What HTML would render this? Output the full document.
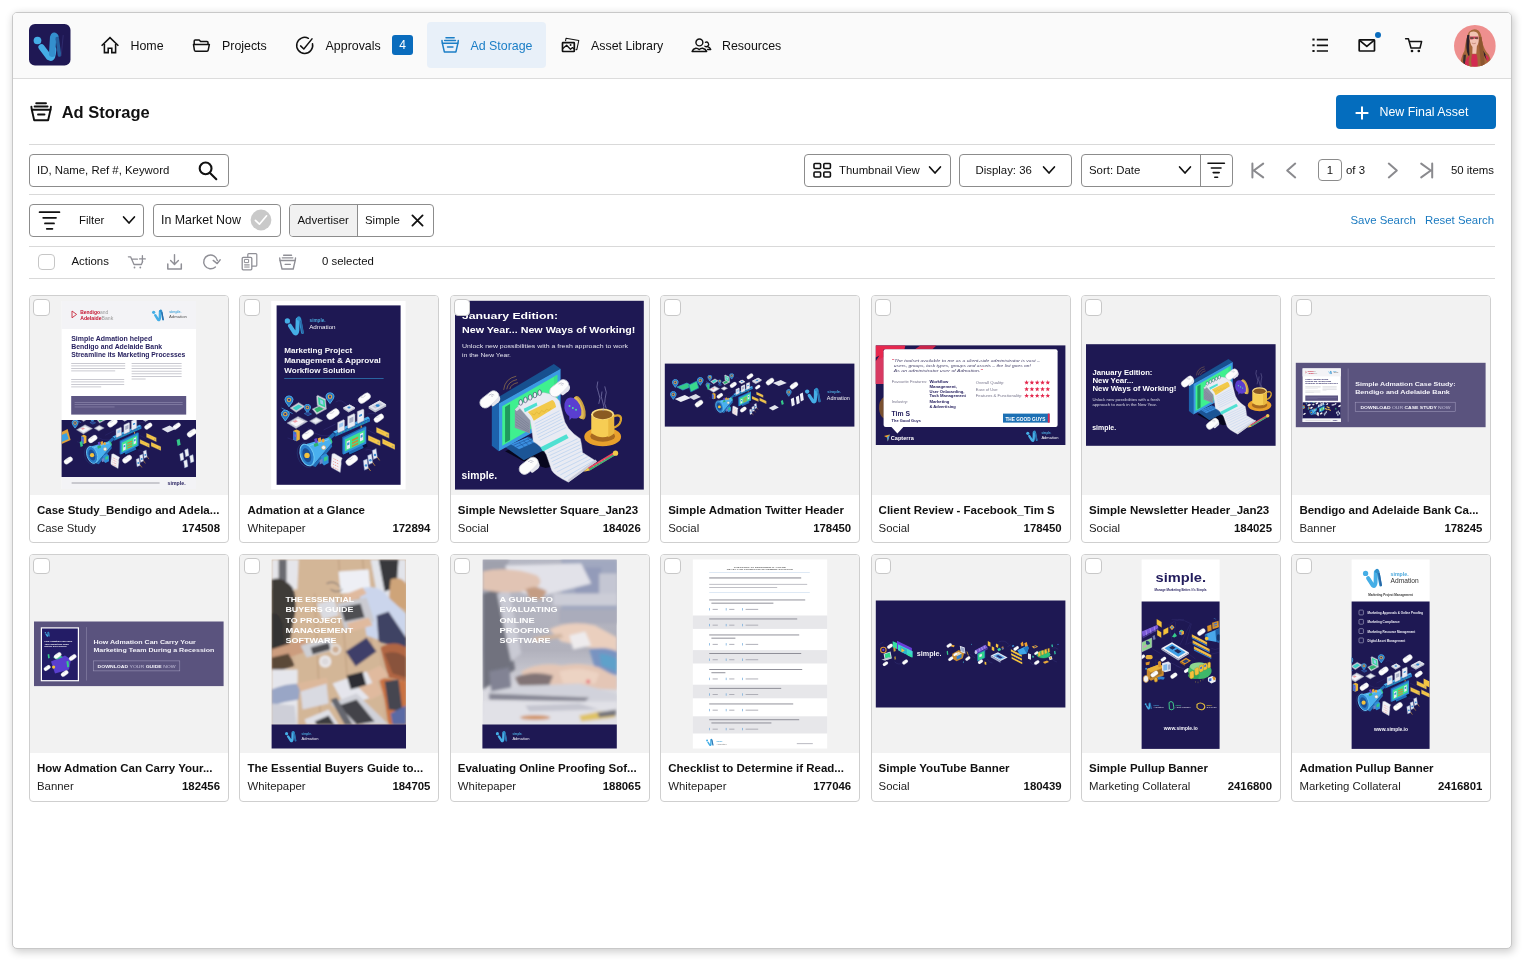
<!DOCTYPE html>
<html lang="en">
<head>
<meta charset="utf-8">
<title>Ad Storage</title>
<style>
*{box-sizing:border-box;margin:0;padding:0}
html,body{width:1530px;height:968px;overflow:hidden;background:#fff}
body{font-family:"Liberation Sans",Arial,Helvetica,sans-serif;color:#111;position:relative;font-size:12px}
.abs{position:absolute}
#frame{position:absolute;left:12px;top:12px;width:1500px;height:937px;border:1px solid #c8c8c8;border-radius:5px;background:#fff;box-shadow:1.5px 2.5px 8px .5px rgba(0,0,0,.2)}
#nav{position:absolute;left:13px;top:13px;width:1498px;height:66px;background:#fafafa;border-bottom:1px solid #dcdcdc;border-radius:4px 4px 0 0}
.nt{position:absolute;top:38.6px;font-size:12.4px;line-height:15px;white-space:nowrap;color:#111}
.hr{position:absolute;left:29px;width:1466px;height:1px;background:#d9d9d9}
.box{position:absolute;border:1px solid #8c8c8c;border-radius:4px;background:#fff;height:33px}
.t12{position:absolute;font-size:12px;line-height:14px;white-space:nowrap;color:#111}
.card{position:absolute;width:200px;height:248px;border:1px solid #cfcfcf;border-radius:4px;background:#fff;overflow:hidden}
.card .img{position:absolute;left:0;top:0;width:198px;height:199px;background:#f2f2f2;overflow:hidden}
.card .cb{position:absolute;left:3.3px;top:3.4px;width:16.4px;height:16.2px;border:1px solid #c8c8c8;border-radius:4px;background:#fff}
.card .ti{position:absolute;left:7px;top:207px;font-size:11.5px;line-height:14px;font-weight:bold;white-space:nowrap;color:#111}
.card .ty{position:absolute;left:7px;top:225px;font-size:11.4px;line-height:14px;white-space:nowrap;color:#222}
.card .id{position:absolute;right:8px;top:225px;font-size:11.4px;line-height:14px;font-weight:bold;white-space:nowrap;color:#111}
.r2 .ti{top:206.2px}.r2 .ty,.r2 .id{top:224.2px}.r2 .img{height:198.6px}
svg{display:block;overflow:visible}
svg svg{overflow:hidden}
</style>
</head>
<body>
<div id="frame"></div>
<div id="wrap" style="position:absolute;left:0;top:0;width:1530px;height:968px;will-change:transform">
<div id="nav"></div>
<!--NAV-->
<!-- logo -->
<svg class="abs" style="left:29px;top:24.3px" width="41.5" height="41.7" viewBox="0 0 42 42">
  <rect width="42" height="42" rx="6" fill="#1f1854"/>
  <circle cx="8.6" cy="16.6" r="3.9" fill="#45aee6"/>
  <path d="M12.6 23.4 L20.4 33.6 Q23.4 35.6 24 30.4 L24.6 26" fill="none" stroke="#45aee6" stroke-width="6.2" stroke-linecap="round" stroke-linejoin="round"/>
  <path d="M23.4 30 L24.4 13.4 Q25.2 10.6 26.6 12.4" fill="none" stroke="#348fcd" stroke-width="6.4" stroke-linecap="round" stroke-linejoin="round"/>
  <path d="M28.6 14.6 L30.8 31.2" fill="none" stroke="#25609f" stroke-width="3.6" stroke-linecap="round"/>
  <path d="M34.6 11.5 L32.6 32" fill="none" stroke="#2f2b6e" stroke-width="1" stroke-linecap="round"/>
</svg>
<!-- home -->
<svg class="abs" style="left:100px;top:36px" width="20" height="18" viewBox="0 0 20 18" fill="none" stroke="#111" stroke-width="1.55" stroke-linejoin="miter">
  <path d="M1.6 9.7 L10 1.6 L18.4 9.7"/>
  <path d="M4.4 8 V16.6 H8.2 V12.2 H11.8 V16.6 H15.6 V8"/>
</svg>
<div class="nt" style="left:130.5px">Home</div>
<!-- projects -->
<svg class="abs" style="left:192px;top:38px" width="20" height="15" viewBox="0 0 20 15" fill="none" stroke="#111" stroke-width="1.5" stroke-linejoin="round">
  <path d="M2.2 6.2 V3 Q2.2 2 3.2 2 H7.2 L8.6 3.6 H15 Q16 3.6 16 4.6 V6.2"/>
  <path d="M1.5 6.4 H17.4 L16.2 12.2 Q16 13.2 15 13.2 H3.6 Q2.6 13.2 2.4 12.2 Z"/>
</svg>
<div class="nt" style="left:222px">Projects</div>
<!-- approvals -->
<svg class="abs" style="left:295px;top:36px" width="20" height="19" viewBox="0 0 20 19" fill="none" stroke="#111" stroke-width="1.5" stroke-linecap="round" stroke-linejoin="round">
  <path d="M17.5 7.7 A8 8 0 1 1 13.4 2.3"/>
  <path d="M5.6 9.9 L8.8 13 L17 2.9"/>
</svg>
<div class="nt" style="left:325.6px">Approvals</div>
<div class="abs" style="left:392px;top:35px;width:21px;height:20px;border-radius:3px;background:#0a6cbd;color:#fff;font-size:12px;line-height:20px;text-align:center">4</div>
<!-- ad storage active -->
<div class="abs" style="left:427px;top:22px;width:119px;height:46px;border-radius:4px;background:#e8f0f9"></div>
<svg class="abs" style="left:439.6px;top:35.4px" width="20" height="19.2" viewBox="0 0 24 23" fill="none" stroke="#1b7ec6" stroke-width="1.8" stroke-linecap="round" stroke-linejoin="round"><use href="#tray"/></svg>
<div class="nt" style="left:470.5px;color:#1b7ec6">Ad Storage</div>
<!-- asset library -->
<svg class="abs" style="left:560px;top:37px" width="20" height="16" viewBox="0 0 20 16" fill="none" stroke="#111" stroke-linejoin="round">
  <path d="M5.5 4.2 L6 1.3 L18.8 3.5 L16.8 12.7 L15.6 12.5" stroke-width="1.05"/>
  <rect x="2.5" y="5.7" width="11.8" height="8.8" rx=".5" stroke-width="1.7"/>
  <path d="M2.9 11.4 L6.6 8.3 L10.5 12.3 L12.5 10.6 L14.2 11.9" stroke-width="1.3"/>
  <circle cx="10.6" cy="8" r=".95" fill="#111" stroke="none"/>
</svg>
<div class="nt" style="left:591px">Asset Library</div>
<!-- resources -->
<svg class="abs" style="left:691px;top:38px" width="21" height="15" viewBox="0 0 21 15" fill="none" stroke="#111" stroke-width="1.45" stroke-linejoin="round" stroke-linecap="round">
  <circle cx="8.4" cy="4.4" r="3.45"/>
  <path d="M1.1 13.4 Q1.9 11 4.8 10.2 Q6.8 10.1 8.2 11.5 Q9.6 10.1 11.6 10.2 Q14.7 11 15.7 13.4 Z"/>
  <path d="M14.4 4.3 A2.3 2.3 0 1 1 13.9 8.2" stroke-width="1.3"/>
  <path d="M16.7 8.7 Q19 9.7 19.8 11.5 H16.6" stroke-width="1.3"/>
</svg>
<div class="nt" style="left:722px">Resources</div>
<!-- right icons -->
<svg class="abs" style="left:1311px;top:37px" width="18" height="16" viewBox="0 0 18 16" fill="none" stroke="#111" stroke-width="1.7" stroke-linecap="butt">
  <path d="M5.8 2.6 H17 M5.8 8.3 H17 M5.8 14 H17"/>
  <path d="M1.4 2.6 H3.6 M1.4 8.3 H3.6 M1.4 14 H3.6" stroke-width="2"/>
</svg>
<svg class="abs" style="left:1357px;top:37px" width="20" height="16" viewBox="0 0 20 16" fill="none" stroke="#111" stroke-width="1.7" stroke-linejoin="round">
  <rect x="2.2" y="2.9" width="15.3" height="11.1" rx=".6"/>
  <path d="M2.6 3.4 L9.8 9.4 L17 3.4"/>
</svg>
<div class="abs" style="left:1374.6px;top:31.5px;width:6.3px;height:6.3px;border-radius:50%;background:#0a6cbd"></div>
<svg class="abs" style="left:1404px;top:37px" width="20" height="17" viewBox="0 0 20 17" fill="none" stroke="#111" stroke-width="1.5" stroke-linejoin="round" stroke-linecap="round">
  <path d="M1.6 1.8 H4.4 L7 11 H16 L17.6 4.6 H6"/>
  <circle cx="8" cy="14" r=".6" fill="#111"/>
  <circle cx="14.8" cy="14" r=".6" fill="#111"/>
</svg>
<!-- avatar -->
<svg class="abs" style="left:1453.6px;top:24.6px" width="41.8" height="41.8" viewBox="0 0 42 42">
  <defs><clipPath id="avc"><circle cx="21" cy="21" r="21"/></clipPath></defs>
  <g clip-path="url(#avc)">
    <rect width="42" height="42" fill="#ee8f8e"/>
    <path d="M6 42 Q7 32 10.5 26 Q12 12 15 7 Q19.5 2.4 24.5 5.6 Q27.4 8 28 15 Q30 25 35 30 Q38 36 38 42 Z" fill="#a5673a"/>
    <path d="M13.4 10 Q11.6 20 13 27 Q14 31 15.6 32 Q14.6 22 15.8 10 Z" fill="#2b202c"/>
    <path d="M9.6 30 Q8.6 36 10 42 H12 Q11 35 12 30 Z" fill="#3a2a30"/>
    <path d="M29.6 26 Q32 31 34.4 33 L32.6 35 Q30 31 29 27 Z" fill="#2b202c"/>
    <path d="M24 12 Q26 24 27 42 H31 Q30 24 27.6 12 Z" fill="#8d5630"/>
    <path d="M15.6 9 Q16 6.4 20 6.6 Q24.6 7 24.8 12 Q25.4 18 23 21.4 L22.4 29 H18.4 L18.6 22 Q15.4 19 15.6 9 Z" fill="#f1c3b3"/>
    <path d="M15.8 11.6 H24.4 V14 Q22.4 15 20.6 13.6 Q18 15.4 15.8 14 Z" fill="#c9415e"/>
    <path d="M16.4 12.4 H19.4 V14 H16.4 Z M21.2 12.4 H24 V14 H21.2 Z" fill="#6a4a40"/>
    <path d="M18 18.2 Q20 19.4 22 18.2" stroke="#b97a6a" stroke-width=".7" fill="none"/>
    <path d="M10.6 42 Q11 31 18.4 29.4 L22.6 29.4 Q24 33 23.8 42 Z" fill="#d32b51"/>
    <path d="M31.4 30 Q34 30.4 35.4 34 L33.4 37 Q32 33 31.4 30 Z" fill="#d32b51"/>
    <path d="M16 30 Q14 36 15 42 H18 Q16.4 36 18 30 Z" fill="#a5673a"/>
  </g>
</svg>
<!--TOOLBAR-->
<!-- title row -->
<svg class="abs" style="left:29px;top:100px" width="24" height="23" viewBox="0 0 24 23" fill="none" stroke="#111" stroke-width="1.9" stroke-linecap="round" stroke-linejoin="round"><use href="#tray"/></svg>
<div class="abs" style="left:61.7px;top:102.4px;font-size:16.5px;line-height:20px;font-weight:bold;color:#111;white-space:nowrap">Ad Storage</div>
<div class="abs" style="left:1336px;top:95.2px;width:159.5px;height:33.5px;border-radius:4px;background:#046dbe"></div>
<svg class="abs" style="left:1355px;top:105.5px" width="14" height="14" viewBox="0 0 14 14" fill="none" stroke="#fff" stroke-width="2"><path d="M7 .6 V13.4 M.6 7 H13.4"/></svg>
<div class="abs" style="left:1379.5px;top:105px;font-size:12.4px;line-height:15px;color:#fff;white-space:nowrap">New Final Asset</div>
<div class="hr" style="top:144px"></div>
<!-- search row -->
<div class="box" style="left:29px;top:154px;width:200px"></div>
<div class="t12" style="left:37px;top:163px;font-size:11.4px">ID, Name, Ref #, Keyword</div>
<svg class="abs" style="left:197px;top:160px" width="22" height="22" viewBox="0 0 22 22" fill="none" stroke="#111" stroke-width="2.1" stroke-linecap="round"><circle cx="8.6" cy="8.4" r="5.9"/><path d="M13 12.9 L19.3 19.2"/></svg>
<div class="box" style="left:804px;top:154px;width:147px"></div>
<svg class="abs" style="left:813px;top:162px" width="19" height="17" viewBox="0 0 19 17" fill="none" stroke="#111" stroke-width="1.6"><rect x="1" y="1.5" width="6.6" height="5" rx="1"/><rect x="10.8" y="1.5" width="6.6" height="5" rx="1"/><rect x="1" y="10" width="6.6" height="5" rx="1"/><rect x="10.8" y="10" width="6.6" height="5" rx="1"/></svg>
<div class="t12" style="left:839px;top:163px;font-size:11.4px">Thumbnail View</div>
<svg class="abs chev" style="left:928px;top:165px" width="14" height="10" viewBox="0 0 14 10" fill="none" stroke="#111" stroke-width="1.7" stroke-linecap="round" stroke-linejoin="round"><path d="M1.6 2 L7 8 L12.4 2"/></svg>
<div class="box" style="left:959px;top:154px;width:113px"></div>
<div class="t12" style="left:975.5px;top:163px;font-size:11.4px">Display: 36</div>
<svg class="abs chev" style="left:1041.5px;top:165px" width="14" height="10" viewBox="0 0 14 10" fill="none" stroke="#111" stroke-width="1.7" stroke-linecap="round" stroke-linejoin="round"><path d="M1.6 2 L7 8 L12.4 2"/></svg>
<div class="box" style="left:1081px;top:154px;width:152px"></div>
<div class="abs" style="left:1199.5px;top:155px;width:1px;height:31px;background:#8c8c8c"></div>
<div class="t12" style="left:1089px;top:163px;font-size:11.4px">Sort: Date</div>
<svg class="abs chev" style="left:1178px;top:165px" width="14" height="10" viewBox="0 0 14 10" fill="none" stroke="#111" stroke-width="1.7" stroke-linecap="round" stroke-linejoin="round"><path d="M1.6 2 L7 8 L12.4 2"/></svg>
<svg class="abs" style="left:1206px;top:161px" width="20" height="18" viewBox="0 0 20 18" fill="none" stroke="#111" stroke-width="1.6" stroke-linecap="round"><path d="M2 2.2 H18.4 M5.4 7 H15 M7.2 11.6 H13.2 M8.8 16.2 H11.6"/></svg>
<!-- pagination -->
<svg class="abs" style="left:1250px;top:161px" width="16" height="19" viewBox="0 0 16 19" fill="none" stroke="#8a8a8e" stroke-width="2" stroke-linecap="round" stroke-linejoin="round"><path d="M2.4 2.4 V16.6 M13.2 2.6 L3.8 9.5 L13.2 16.4"/></svg>
<svg class="abs" style="left:1285px;top:161px" width="14" height="19" viewBox="0 0 14 19" fill="none" stroke="#8a8a8e" stroke-width="2" stroke-linecap="round" stroke-linejoin="round"><path d="M10.2 2.6 L2.2 9.5 L10.2 16.4"/></svg>
<div class="abs" style="left:1318px;top:159px;width:24px;height:22px;border:1px solid #8c8c8c;border-radius:4px;background:#fff;font-size:11.4px;line-height:20px;text-align:center;color:#111">1</div>
<div class="t12" style="left:1346px;top:163px;font-size:11.4px">of 3</div>
<svg class="abs" style="left:1386px;top:161px" width="14" height="19" viewBox="0 0 14 19" fill="none" stroke="#8a8a8e" stroke-width="2" stroke-linecap="round" stroke-linejoin="round"><path d="M2.8 2.6 L10.8 9.5 L2.8 16.4"/></svg>
<svg class="abs" style="left:1418px;top:161px" width="16" height="19" viewBox="0 0 16 19" fill="none" stroke="#8a8a8e" stroke-width="2" stroke-linecap="round" stroke-linejoin="round"><path d="M14.2 2.4 V16.6 M3.2 2.6 L12.8 9.5 L3.2 16.4"/></svg>
<div class="t12" style="left:1451px;top:163px;font-size:11.4px">50 items</div>
<div class="hr" style="top:194px"></div>
<!-- filter row -->
<div class="box" style="left:29px;top:204px;width:115px"></div>
<svg class="abs" style="left:37px;top:210px" width="25" height="21" viewBox="0 0 25 21" fill="none" stroke="#111" stroke-width="1.8" stroke-linecap="round"><path d="M2.6 2.2 H22.4 M6.2 7.8 H19 M8 13.4 H17 M9.8 18.8 H15.4"/></svg>
<div class="t12" style="left:79px;top:213px;font-size:11.4px">Filter</div>
<svg class="abs chev" style="left:122px;top:215px" width="14" height="10" viewBox="0 0 14 10" fill="none" stroke="#111" stroke-width="1.7" stroke-linecap="round" stroke-linejoin="round"><path d="M1.6 2 L7 8 L12.4 2"/></svg>
<div class="box" style="left:153px;top:204px;width:128px"></div>
<div class="t12" style="left:161px;top:213px;font-size:12.4px;line-height:15px">In Market Now</div>
<svg class="abs" style="left:250px;top:209px" width="22" height="22" viewBox="0 0 22 22"><circle cx="11" cy="11" r="10.4" fill="#c9c9c9"/><path d="M5.4 11.4 L9.4 15.2 L16.6 6.8" fill="none" stroke="#fff" stroke-width="1.7" stroke-linecap="round" stroke-linejoin="round"/></svg>
<div class="box" style="left:289px;top:204px;width:145px;overflow:hidden"><div style="position:absolute;left:0;top:0;width:68px;height:31px;background:#f1f1f1;border-right:1px solid #8c8c8c"></div></div>
<div class="t12" style="left:297.5px;top:213px;font-size:11.4px">Advertiser</div>
<div class="t12" style="left:365px;top:213px;font-size:11.4px">Simple</div>
<svg class="abs" style="left:411px;top:214px" width="13" height="13" viewBox="0 0 13 13" fill="none" stroke="#111" stroke-width="1.8" stroke-linecap="round"><path d="M1.4 1.4 L11.6 11.6 M11.6 1.4 L1.4 11.6"/></svg>
<div class="t12" style="left:1350.5px;top:213px;font-size:11.4px;color:#1a7ac0">Save Search</div>
<div class="t12" style="left:1425px;top:213px;font-size:11.4px;color:#1a7ac0">Reset Search</div>
<div class="hr" style="top:245.7px"></div>
<!-- actions row -->
<div class="abs" style="left:38px;top:253.5px;width:17px;height:16.5px;border:1px solid #c6c6c6;border-radius:4px;background:#fff"></div>
<div class="t12" style="left:71.5px;top:253.8px;font-size:11.4px">Actions</div>
<svg class="abs" style="left:120px;top:248px" width="180" height="28" viewBox="0 0 180 28" fill="none" stroke="#8f8f96" stroke-width="1.4" stroke-linecap="round" stroke-linejoin="round">
  <path d="M8.4 8.8 H10.6 L14 16.5 H21.4 L22.6 13.4 M12 11.2 H17.4" stroke-width="1.3"/>
  <circle cx="14.5" cy="19.5" r=".9" fill="#8f8f96" stroke="none"/><circle cx="20.3" cy="19.5" r=".9" fill="#8f8f96" stroke="none"/>
  <path d="M22.4 7.7 V14 M19.5 10.9 H25.3" stroke-width="1.3"/>
  <path d="M54.5 6.6 V16.2 M50.6 12.4 L54.5 16.4 L58.4 12.4"/>
  <path d="M47.8 16 V20.9 H61.3 V16" stroke-width="1.5"/>
  <path d="M97.4 12.6 A6.9 6.9 0 1 0 95.4 18.9"/>
  <path d="M93.2 12.4 L97.2 15.6 L100.2 11.8"/>
  <path d="M127.8 9 V6.6 Q127.8 5.6 128.8 5.6 H135.8 Q136.8 5.6 136.8 6.6 V17.2 Q136.8 18.2 135.8 18.2 H132.4" stroke-width="1.2"/>
  <rect x="122.2" y="9.4" width="9.6" height="12.4" rx="1" stroke-width="1.3"/>
  <rect x="124.8" y="11.4" width="3.8" height="3.2" stroke-width="1"/>
  <path d="M124.6 16.6 H129.2 M124.6 17.9 H129.2 M124.6 19.2 H129.2" stroke-width=".8"/>
  <svg x="157.8" y="4.6" width="19.4" height="18.6" viewBox="0 0 24 23" overflow="visible" stroke-width="1.7"><use href="#tray"/></svg>
</svg>
<div class="t12" style="left:322px;top:253.8px;font-size:11.4px">0 selected</div>
<div class="hr" style="top:277.6px"></div>
<!--CARDS-->
<svg width="0" height="0" style="position:absolute">
<defs>
<symbol id="tray" viewBox="0 0 24 23" overflow="visible"><path d="M7.2 3.3 H17 M5.6 6.5 H18.6"/><path d="M2.4 6.6 Q2.4 8 2.8 9.8 L5.2 20.3 H19.1 L21.5 9.8 Q21.9 8 21.9 6.6"/><path d="M2.9 9.8 H21.4"/><path d="M9 14.5 H15.5"/></symbol>
<symbol id="lg" viewBox="0 0 30 30">
  <circle cx="4.6" cy="8.6" r="3.6" fill="#45aee6"/>
  <path d="M8 15 L14.4 25 Q17.6 27.4 18.2 21.4 L18.6 6.5" fill="none" stroke="#45aee6" stroke-width="5.4" stroke-linecap="round" stroke-linejoin="round"/>
  <path d="M19 6 Q20.2 2.4 21.6 6 L25.2 24.6" fill="none" stroke="#2f8fcb" stroke-width="3.8" stroke-linecap="round" stroke-linejoin="round"/>
  <path d="M23 9 L25.6 24.8" fill="none" stroke="#2a66a4" stroke-width="2.2" stroke-linecap="round"/>
</symbol>
<symbol id="cl" viewBox="0 0 14 12">
  <g transform="rotate(-35 7 6)"><rect x="1" y="3" width="12.4" height="6.4" rx="3.2" fill="#fdfdfd" stroke="#c9cbd6" stroke-width=".5"/><path d="M5 3.4 Q7 6 9.6 4.4" fill="none" stroke="#b8bac8" stroke-width=".5"/></g>
</symbol>
<symbol id="pin" viewBox="0 0 10 12">
  <path d="M5 11.6 L1.5 6.6 A4.2 4.2 0 1 1 8.5 6.6 Z" fill="#2a78c4" stroke="#58b8f0" stroke-width=".9"/><circle cx="5" cy="4.4" r="2.3" fill="#e9a93a"/><circle cx="5" cy="4.4" r="1.2" fill="#2b3a8a"/>
</symbol>
<symbol id="iso" viewBox="0 0 120 90">
  <g stroke="#34307a" stroke-width=".5" fill="none"><path d="M28 38 Q42 50 54 44 M44 40 L56 34 M56 12 Q62 8 68 16 M88 24 Q96 22 100 26 M88 40 L96 44 M86 60 Q92 58 96 64 M8 48 L14 50 M58 72 L52 70 M3 19 L14 24"/><ellipse cx="27" cy="65" rx="9" ry="12.6" transform="rotate(-18 27 65)" stroke="#2e4a8a" stroke-width=".4"/></g>
  <path d="M2 18 L13 23.6" stroke="#3b9fe0" stroke-width=".7"/>
  <!-- tablets / laptops top-left -->
  <path d="M10.4 18 L19 12.6 L25.4 16.4 L16.6 22.4 Z" fill="#c9ccd8" stroke="#8d93ad" stroke-width=".5"/>
  <path d="M13 18 L19 14.4 L22.6 16.6 L16.6 20.4 Z" fill="#3fd0c8"/>
  <path d="M32.6 19 L42 14.6 L46.8 19 L37 24.4 Z" fill="#cfd3de" stroke="#8d93ad" stroke-width=".5"/>
  <path d="M34.6 19 L41.6 15.8 L44.6 18.8 L37.4 22.6 Z" fill="#2fb36e"/>
  <path d="M37 6.4 L38 5.2 L46 9 L46.8 19 L45.4 19.4 L37.6 15.4 Z" fill="#cfd3de" stroke="#8d93ad" stroke-width=".5"/>
  <path d="M38.4 7 L45 10.2 L45.6 17.6 L39 14.4 Z" fill="#3ad6a0"/><path d="M40.4 9.4 L43.4 10.8 L43.8 15 L40.8 13.6 Z" fill="#9fd0f0"/>
  <path d="M7.4 33 L18.4 26.4 L28 31.4 L16.4 38.4 Z" fill="#c9ccd8" stroke="#8d93ad" stroke-width=".5"/>
  <path d="M10.6 33 L18.4 28.4 L24.8 31.6 L16.6 36.4 Z" fill="#f4f4f9"/><path d="M13 31.6 L16 30 L18.4 31.2 L15.4 32.8 Z" fill="#f0a0a8"/>
  <path d="M30 31 L36.6 27.2 L43 30.6 L36 34.6 Z" fill="#c9ccd8" stroke="#8d93ad" stroke-width=".5"/><path d="M32.4 31 L36.6 28.6 L40.6 30.6 L36.2 33 Z" fill="#eceef5"/>
  <path d="M13.4 41 L17 39.4 L20.2 41 L20.2 49.6 L16.8 51.2 L13.4 49.6 Z" fill="#e9b23a"/><path d="M13.4 41 L16.8 42.6 L16.8 51.2 L13.4 49.6 Z" fill="#3b6fd0"/><path d="M15 44 l1.8 .9 v2.4 l-1.8 -.9z" fill="#8a5ad8"/>
  <use href="#pin" x="4.6" y="5.6" width="9.6" height="11.6"/>
  <use href="#pin" x="45.6" y="2.4" width="9.6" height="11.6"/>
  <use href="#pin" x="1" y="20" width="9.4" height="11.4"/>
  <use href="#pin" x="24" y="14" width="7.6" height="9.2"/>
  <path d="M24.6 23.6 L28 22 L32 24 L28.4 25.8 Z" fill="#2a3a8a" stroke="#3b9fe0" stroke-width=".4"/>
  <!-- gray devices -->
  <path d="M89 16.6 L100 10.6 L106.6 14.4 L106.6 16.4 L95.6 22.6 L89 18.6 Z" fill="#b9bdcc"/>
  <path d="M89 16.6 L100 10.6 L106.6 14.4 L95.6 20.6 Z" fill="#dfe2ec"/><path d="M92.6 16.6 L100 12.6 L103.4 14.6 L95.8 18.6 Z" fill="#c3c7d6"/><ellipse cx="98" cy="15.6" rx="2" ry="1.3" fill="#2f86d0"/>
  <path d="M63.6 17.6 L70 14.4 L75.4 17.6 L75.4 19 L69 22.4 L63.6 19 Z" fill="#b9bdcc"/><path d="M63.6 17.6 L70 14.4 L75.4 17.6 L69 21 Z" fill="#dfe2ec"/><ellipse cx="69.4" cy="17.6" rx="1.6" ry="1" fill="#2f86d0"/>
  <!-- conveyor -->
  <path d="M53.6 41.4 L88.4 26.4 L90.4 28.4 L55.6 43.6 Z" fill="#49b0ee"/>
  <path d="M55.6 43.6 L90.4 28.4 L90.4 31.6 L55.6 46.8 Z" fill="#2378c4"/>
  <path d="M53.6 41.4 L55.6 43.6 L55.6 46.8 L53.6 44.6 Z" fill="#164f8e"/>
  <path d="M58 44.4 L88 31.4" stroke="#35c98a" stroke-width=".8" stroke-dasharray="1.4 2"/>
  <g stroke="#8a90aa" stroke-width=".5">
    <path d="M58 32.4 L64 29.6 L65 30.4 L65 40 L59 42.8 L58 42 Z" fill="#e9ebf3"/><path d="M68 26.6 L74.4 23.6 L75.4 24.4 L75.4 35.4 L69 38.4 L68 37.6 Z" fill="#e9ebf3"/><path d="M77.6 21.6 L83.4 19 L84.4 19.8 L84.4 30.6 L78.6 33.4 L77.6 32.6 Z" fill="#e9ebf3"/>
  </g>
  <path d="M59.6 34 L63.6 32.2 V36 L59.6 37.8 Z" fill="#9ec8f0"/><path d="M69.8 28.4 L73.8 26.6 V31.4 L69.8 33.2 Z" fill="#aab0c6"/><path d="M79.2 23.6 L82.8 22 V27 L79.2 28.6 Z" fill="#f4f4fa"/><path d="M79.6 25 L82.4 23.8 V25.8 L79.6 27 Z" fill="#3b8fd6"/>
  <path d="M66 46.4 V50.6 M81.6 35.6 V39.6" stroke="#e9a93a" stroke-width="1"/>
  <!-- monitor -->
  <path d="M66 60 L86 51 L88 56.4 L70 65.6 Z" fill="#0f1040"/>
  <path d="M68 60 L82 53.6 L84 58 L70 64.4 Z" fill="#1f6db6"/>
  <path d="M62.6 47 L85.6 36 L86.6 36.8 L86.6 53.4 L63.8 64.4 L62.6 63.6 Z" fill="#1c62ac"/>
  <path d="M63.8 48 L86.6 36.8 L86.6 53.4 L63.8 64.4 Z" fill="#2f8fd8"/>
  <path d="M65.4 49.6 L85 40 L85 52 L65.4 61.6 Z" fill="#3fe391"/>
  <path d="M67 51.6 L70.4 50 V58 L67 59.6 Z M80.4 44 L83.6 42.4 V50 L80.4 51.6 Z" fill="#e9ebf3"/><path d="M67.6 53 l2.2 -1 v2.6 l-2.2 1z M81 45.4 l2 -1 v2.6 l-2 1z" fill="#3b8fd6"/>
  <path d="M72.4 49.6 L78.6 46.6 V48.2 L72.4 51.2 Z M72.4 52.6 L78.6 49.6 V51.2 L72.4 54.2 Z M72.4 55.6 L78.6 52.6 V54.2 L72.4 57.2 Z" fill="#c98a3a"/>
  <!-- yellow cards -->
  <g fill="#f5c84a" stroke="#2e2a6a" stroke-width=".4">
    <path d="M96.6 37 L109.6 43 L109.6 48.4 L96.6 42.4 Z"/><path d="M88.4 45 L100.8 50.6 L100.8 56 L88.4 50.4 Z"/><path d="M102.6 48.4 L115.4 54.4 L115.4 59.8 L102.6 53.8 Z"/>
  </g>
  <g fill="#b9a66a"><circle cx="107.4" cy="45" r="1"/><circle cx="98.6" cy="52.6" r="1"/><circle cx="113" cy="56.4" r="1"/></g>
  <g stroke="#d9a832" stroke-width=".5"><path d="M98 40 L104 42.8 M90 48 L95.6 50.6 M104 51.4 L110 54.2"/></g>
  <!-- megaphone -->
  <path d="M53.4 42.6 L55.4 45.6 L51 49.8 L48.6 47 Z" fill="#1f6db6"/>
  <ellipse cx="50" cy="50.6" rx="2.2" ry="3.6" transform="rotate(-30 50 50.6)" fill="#35c98a"/>
  <path d="M27 54 L49 47.6 L52 53.6 L33 76 Z" fill="#49b0ee"/>
  <path d="M33 76 L52 53.6 L52.6 56.6 L36 77 Z" fill="#2371bb"/>
  <path d="M30 55.6 L49 49.6" stroke="#8fd4fa" stroke-width=".8"/>
  <ellipse cx="27.4" cy="65" rx="6.6" ry="11.2" transform="rotate(-18 27.4 65)" fill="#2a7ecb" stroke="#6fcaf6" stroke-width="1"/>
  <ellipse cx="27.2" cy="65.2" rx="4" ry="7.2" transform="rotate(-18 27.2 65.2)" fill="#1b4f95"/>
  <circle cx="27.4" cy="65.4" r="2.7" fill="#f3c23c"/>
  <circle cx="44" cy="57.6" r="2" fill="#f4f4fa" stroke="#e9a93a" stroke-width=".5"/>
  <path d="M34.6 49 l2.4 -1 l1.2 4.4 l-2.4 1z" fill="#6a4ad0"/><path d="M38 48.6 l3 -1.4 l1 4 l-3 1.4z" fill="#e9a93a"/><ellipse cx="43.6" cy="50.4" rx="1.4" ry="2" fill="#e9a93a"/><path d="M34 54 l4 -1.6 l1 3 l-4 1.6z" fill="#2fb36e"/>
  <path d="M41.6 66 L46.6 63.6 L49 66 L49 73 L44.4 75.4 L41.6 72.6 Z" fill="#2f8fd8"/><path d="M44.4 67.6 L48 66 V70 L44.4 71.6 Z" fill="#35c98a"/><path d="M40 70 L43 68.6 V73 L40 74.4 Z" fill="#6f86c8"/>
  <!-- paper -->
  <path d="M52.4 64 Q55 63 56.6 64.6 L62.6 68 Q61 71 61.6 74 L60.6 82.4 L52 77.6 Q51 76 51.4 74 Z" fill="#f1f2f7" stroke="#a4a9be" stroke-width=".5"/>
  <path d="M54 68.6 L59.6 71.4 M53.8 71.4 L59.4 74.2 M53.6 74.2 L59.2 77 M53.4 77 L59 79.8" stroke="#ec6a5e" stroke-width=".7" stroke-dasharray="1 1"/>
  <!-- phones -->
  <g fill="#e9ebf3" stroke="#5f78b0" stroke-width=".5">
    <path d="M92.6 60.4 L96.6 58.6 L97.8 67.6 L93.8 69.4 Z"/><path d="M88 65.6 L92 63.8 L93.2 72.8 L89.2 74.6 Z"/><path d="M83.6 70.6 L87.6 68.8 L88.8 78.4 L84.8 80.2 Z"/>
  </g>
  <g fill="#3b8fd6"><circle cx="95.4" cy="65" r="1.2"/><circle cx="90.8" cy="70.2" r="1.2"/><circle cx="86.4" cy="75.4" r="1.2"/></g>
  <g stroke="#e9a93a" stroke-width=".7"><path d="M97.6 67 L100 70.4 M93 72.4 L95.4 75.8 M88.6 77.6 L91 81"/></g>
  <!-- clouds -->
  <use href="#cl" x="77" y="1.6" width="15" height="13"/>
  <use href="#cl" x="45.4" y="17.4" width="15.4" height="13.4"/>
  <use href="#cl" x="21" y="38.6" width="14" height="12"/>
  <use href="#cl" x="93" y="23" width="12" height="10.4"/>
  <use href="#cl" x="64.6" y="64" width="14.6" height="12.6"/>
</symbol>
<symbol id="cl2" viewBox="0 0 160 150">
  <g transform="rotate(-38 80 75)"><rect x="8" y="40" width="148" height="74" rx="37" fill="#fdfdfd" stroke="#c5c7d3" stroke-width="5"/><path d="M70 112 Q60 130 80 132 L120 132 Q150 128 150 100" fill="#e3e4ec"/><path d="M96 52 Q120 50 126 74 M104 66 Q112 66 114 76" fill="none" stroke="#b9bbc9" stroke-width="5"/></g>
</symbol>
<symbol id="desk" viewBox="0 0 1219 968">
  <path d="M250 690 L430 610 L610 700 L640 790 L540 810 L380 760 Z" fill="#07061e"/>
  <path d="M250 660 L420 585 L565 665 L385 755 Z" fill="#1b5596"/>
  <path d="M292 640 L410 590 L470 622 L350 676 Z" fill="#3b8fe0"/>
  <g stroke="#1b4f95" stroke-width="4"><path d="M310 648 L425 598 M330 660 L445 610 M350 628 L390 660 M380 614 L420 646 M410 600 L450 632"/></g>
  <path d="M155 330 L600 65 L648 98 L205 348 Z" fill="#17508f"/>
  <path d="M155 330 L205 348 L205 690 L155 650 Z" fill="#1c62ac"/>
  <path d="M205 348 L648 98 L648 445 L205 690 Z" fill="#3b9be2"/>
  <path d="M230 368 L625 142 L625 420 L230 650 Z" fill="#3ff08f"/>
  <path d="M250 372 L286 352 L286 610 L250 630 Z" fill="#1f9a5e"/>
  <path d="M625 142 L625 420 L600 434 L600 156 Z" fill="#35d684" opacity=".6"/>
  <g fill="none" stroke="#b9904a" stroke-width="4"><path d="M240 250 Q248 170 330 152"/><path d="M262 246 Q270 190 336 176"/><path d="M284 244 Q292 208 342 198"/></g>
  <!-- paper stack -->
  <path d="M320 390 L346 366 L432 468 L428 562 L320 522 Z" fill="#8e93a6"/>
  <g stroke="#6a6f84" stroke-width="3"><path d="M326 420 L424 500 M326 440 L424 516 M326 460 L424 532 M326 480 L424 546 M326 500 L424 556"/></g>
  <path d="M320 390 L346 366 L360 380 L334 404 Z" fill="#d9dbe6"/>
  <!-- paper scroll -->
  <path d="M340 364 L524 268 Q600 276 640 330 L668 440 Q680 530 790 600 Q800 640 806 700 L908 764 L704 912 Q600 860 584 826 L546 716 Q520 660 452 620 Q440 520 430 468 Z" fill="#e9ebf3" stroke="#b5bacb" stroke-width="3"/>
  <path d="M704 912 L908 764 L900 750 L700 896 Z" fill="#c9ccd9"/>
  <g stroke="#2c2a5a" stroke-width="4" fill="#e9ebf3"><ellipse cx="362" cy="340" rx="13" ry="20"/><ellipse cx="396" cy="322" rx="13" ry="20"/><ellipse cx="430" cy="304" rx="13" ry="20"/><ellipse cx="464" cy="287" rx="13" ry="20"/><ellipse cx="498" cy="270" rx="13" ry="20"/></g>
  <path d="M384 386 L476 340 L482 362 L392 410 Z" fill="#4fe0d2"/>
  <path d="M414 408 L588 322 Q608 330 616 372 L456 472 Q440 430 414 408 Z" fill="#f2c94a"/>
  <path d="M440 420 l20 10 l16 -22 l18 16 l18 -26 l20 12 l16 -22 l18 10 l14 -18" fill="none" stroke="#d9b030" stroke-width="4"/>
  <g stroke="#a9c8ee" stroke-width="4"><path d="M462 492 L640 400 M466 512 L646 420 M470 532 L652 440 M474 552 L660 458 M480 572 L668 478 M488 592 L676 498 M498 612 L686 520 M560 700 L770 600 M568 722 L784 620 M576 744 L792 642 M584 766 L798 664 M592 790 L800 690 M604 814 L820 710 M622 838 L844 728 M646 860 L866 744 M672 882 L886 758"/></g>
  <path d="M504 662 L690 568 L706 596 L522 692 Z" fill="#4fe0d2"/>
  <!-- bubble -->
  <ellipse cx="786" cy="378" rx="34" ry="88" transform="rotate(-18 786 378)" fill="#c9a040"/>
  <ellipse cx="776" cy="380" rx="30" ry="82" transform="rotate(-18 776 380)" fill="#e0ba58"/>
  <path d="M676 350 Q690 290 742 308 Q806 350 796 430 Q770 466 728 452 L712 468 L710 440 Q668 410 676 350 Z" fill="#5a3fd0"/>
  <circle cx="712" cy="366" r="7" fill="#4fe0a2"/><circle cx="736" cy="380" r="7" fill="#4fe0a2"/><circle cx="759" cy="393" r="7" fill="#4fe0a2"/>
  <!-- cup -->
  <ellipse cx="950" cy="586" rx="132" ry="68" fill="#e8a02c"/>
  <ellipse cx="950" cy="582" rx="88" ry="40" fill="#a86a20"/>
  <path d="M1030 438 Q1090 420 1080 470 Q1070 510 1026 522" fill="none" stroke="#d9a32e" stroke-width="16"/>
  <path d="M868 424 V560 Q950 620 1032 560 V424 Z" fill="#f6cd54"/>
  <path d="M990 440 V590 Q1020 580 1032 560 V424 Z" fill="#e9b840"/>
  <ellipse cx="950" cy="424" rx="82" ry="40" fill="#f8dc84"/>
  <ellipse cx="950" cy="428" rx="70" ry="32" fill="#8a5a22"/>
  <g fill="none" stroke="#9a98c8" stroke-width="4"><path d="M915 190 Q900 230 920 270 Q940 310 922 350"/><path d="M945 262 Q932 300 950 336 Q966 372 952 402"/><path d="M965 225 Q985 270 968 310 Q956 350 976 384"/></g>
  <!-- pencil -->
  <path d="M846 806 L1040 690 L1052 712 L858 828 Z" fill="#e8465f"/>
  <path d="M852 818 L1046 702 L1052 712 L858 828 Z" fill="#2fb878"/>
  <path d="M846 806 L858 828 L814 838 Z" fill="#f2c94a"/>
  <circle cx="1042" cy="704" r="19" fill="#f2c94a"/>
  <g stroke="#f6a0b0" stroke-width="3"><path d="M880 792 l8 12 M900 780 l8 12 M920 768 l8 12 M940 756 l8 12 M960 744 l8 12"/></g>
  <!-- clouds -->
  <use href="#cl2" x="52" y="240" width="166" height="156"/>
  <use href="#cl2" x="552" y="160" width="166" height="156"/>
  <use href="#cl2" x="334" y="716" width="166" height="156"/>
</symbol>
</defs>
</svg>
<div class="card" style="left:29.0px;top:295px"><div class="img"><svg class="abs" style="left:-1px;top:-1px" width="200" height="200" viewBox="0 0 200 200" font-family="Liberation Sans, sans-serif"><g transform="translate(0 -0.0)"><g transform="translate(32.6 6)"><rect x="0" y="0" width="134.4" height="188" fill="#fff"/><rect x="0" y="0" width="134.4" height="28" fill="#f3f3f6"/><path d="M10.4 10 L15 13.4 L10.4 16.8 Z" fill="none" stroke="#c8283c" stroke-width=".9"/><text x="18.6" y="13" font-size="5.2" font-weight="bold" fill="#c4122f" textLength="28" lengthAdjust="spacingAndGlyphs" >Bendigo<tspan fill="#9a9a9a" font-weight="normal">and</tspan></text><text x="18.6" y="18.6" font-size="5.2" font-weight="bold" fill="#c4122f" textLength="33" lengthAdjust="spacingAndGlyphs" >Adelaide<tspan fill="#9a9a9a" font-weight="normal">Bank</tspan></text><use href="#lg" x="90" y="7.4" width="13.6" height="13.6"/><text x="107.6" y="12.2" font-size="3.6" font-weight="bold" fill="#4aa8dc" >simple.</text><text x="107.4" y="17.4" font-size="4.4" font-weight="normal" fill="#555" textLength="18" lengthAdjust="spacingAndGlyphs" >Admation</text><text x="9.6" y="39.6" font-size="6.3" font-weight="bold" fill="#221c5c" textLength="81" lengthAdjust="spacingAndGlyphs" >Simple Admation helped</text><text x="9.6" y="47.6" font-size="6.3" font-weight="bold" fill="#221c5c" textLength="91" lengthAdjust="spacingAndGlyphs" >Bendigo and Adelaide Bank</text><text x="9.6" y="55.8" font-size="6.3" font-weight="bold" fill="#221c5c" textLength="114" lengthAdjust="spacingAndGlyphs" >Streamline its Marketing Processes</text><rect x="9.6" y="62.00" width="54" height="0.8" fill="#bdbdc6"/><rect x="9.6" y="64.50" width="54" height="0.8" fill="#bdbdc6"/><rect x="9.6" y="67.00" width="54" height="0.8" fill="#bdbdc6"/><rect x="9.6" y="69.50" width="44" height="0.8" fill="#bdbdc6"/><rect x="9.6" y="78.00" width="53" height="0.8" fill="#bdbdc6"/><rect x="9.6" y="80.50" width="53" height="0.8" fill="#bdbdc6"/><rect x="9.6" y="83.00" width="53" height="0.8" fill="#bdbdc6"/><rect x="9.6" y="85.50" width="30" height="0.8" fill="#bdbdc6"/><rect x="70" y="62.00" width="50" height="0.8" fill="#bdbdc6"/><rect x="70" y="64.60" width="50" height="0.8" fill="#bdbdc6"/><rect x="70" y="67.20" width="50" height="0.8" fill="#bdbdc6"/><rect x="70" y="69.80" width="50" height="0.8" fill="#bdbdc6"/><rect x="70" y="72.40" width="50" height="0.8" fill="#bdbdc6"/><rect x="70" y="75.00" width="50" height="0.8" fill="#bdbdc6"/><rect x="70" y="77.60" width="14" height="0.8" fill="#bdbdc6"/><rect x="9.6" y="95" width="115" height="18.6" fill="#5d5683"/><rect x="13" y="101.00" width="108" height="0.7" fill="#8c86ad"/><rect x="13" y="103.30" width="108" height="0.7" fill="#8c86ad"/><rect x="13" y="105.60" width="40" height="0.7" fill="#8c86ad"/><rect x="0" y="119" width="134.4" height="57" fill="#1e1853"/><svg x="0" y="119" width="134.4" height="57" viewBox="0 0 134.4 57"><use href="#iso" x="9" y="-16" width="94" height="70.5"/><use href="#cl" x="124" y="8" width="12" height="10"/><use href="#cl" x="1" y="36" width="11" height="9"/><use href="#cl" x="110" y="2" width="10" height="8"/><path d="M0 12 L6 9 L9 20 L0 24 Z" fill="#e0a23a"/><path d="M0 15 L5 13 L7 19 L0 22 Z" fill="#3aa0e2"/><path d="M100 9 L108 5.6 L114 9 L106 12.4 Z" fill="#dfe3ee"/><g fill="#eef0f6" stroke="#6f86b8" stroke-width=".4"><path d="M118 34 l3.4 -1.4 l1 7 l-3.4 1.4z M123 30 l3.4 -1.4 l1 7 l-3.4 1.4z M128 36 l3.4 -1.4 l1 7 l-3.4 1.4z M122 41 l3.4 -1.4 l1 7 l-3.4 1.4z"/></g><path d="M18 22 l2.4 -1 l1 5 l-2.4 1z" fill="#35c98a"/><path d="M115 20 l3 -1.2 l1 6 l-3 1.2z" fill="#35c98a"/></svg><rect x="0" y="176" width="134.4" height="12" fill="#f3f3f6"/><rect x="10" y="181.6" width="88" height=".8" fill="#8a8a96"/><text x="106" y="184" font-size="5.6" font-weight="bold" fill="#221c5c" textLength="18" lengthAdjust="spacingAndGlyphs" >simple.</text></g></g></svg></div><div class="cb"></div><div class="ti">Case Study_Bendigo and Adela...</div><div class="ty">Case Study</div><div class="id">174508</div></div>
<div class="card" style="left:239.4px;top:295px"><div class="img"><svg class="abs" style="left:-1px;top:-1px" width="200" height="200" viewBox="0 0 200 200" font-family="Liberation Sans, sans-serif"><g transform="translate(-0.4 -0.0)"><rect x="32.6" y="6" width="134.4" height="188.4" fill="#fff"/><rect x="38" y="10.4" width="124" height="179.4" fill="#1e1853"/><use href="#lg" x="45.4" y="19.6" width="22" height="22"/><text x="71" y="27.4" font-size="4.6" font-weight="bold" fill="#4aa8dc" textLength="16" lengthAdjust="spacingAndGlyphs" >simple.</text><text x="70.6" y="34.4" font-size="6" font-weight="normal" fill="#f4f4f8" textLength="26.4" lengthAdjust="spacingAndGlyphs" >Admation</text><text x="45.6" y="58.4" font-size="7.4" font-weight="bold" fill="#f6f6fa" textLength="68" lengthAdjust="spacingAndGlyphs" >Marketing Project</text><text x="45.6" y="68" font-size="7.4" font-weight="bold" fill="#f6f6fa" textLength="96.6" lengthAdjust="spacingAndGlyphs" >Management &amp; Approval</text><text x="45.6" y="77.6" font-size="7.4" font-weight="bold" fill="#f6f6fa" textLength="71" lengthAdjust="spacingAndGlyphs" >Workflow Solution</text><rect x="45.6" y="83.2" width="99.4" height=".7" fill="#2f86c0"/><use href="#iso" x="41" y="95" width="120" height="90"/></g></svg></div><div class="cb"></div><div class="ti">Admation at a Glance</div><div class="ty">Whitepaper</div><div class="id">172894</div></div>
<div class="card" style="left:449.8px;top:295px"><div class="img"><svg class="abs" style="left:-1px;top:-1px" width="200" height="200" viewBox="0 0 200 200" font-family="Liberation Sans, sans-serif"><g transform="translate(-0.8 -0.0)"><rect x="5.8" y="5.8" width="188.8" height="188.8" fill="#1e1853"/><text x="12.8" y="24.4" font-size="9.6" font-weight="bold" fill="#fff" textLength="96" lengthAdjust="spacingAndGlyphs" >January Edition:</text><text x="12.8" y="37.8" font-size="8.3" font-weight="bold" fill="#fff" textLength="173.4" lengthAdjust="spacingAndGlyphs" >New Year... New Ways of Working!</text><text x="12.8" y="53.2" font-size="5.6" font-weight="normal" fill="#e4e4ee" textLength="166" lengthAdjust="spacingAndGlyphs" >Unlock new possibilities with a fresh approach to work</text><text x="12.8" y="61.6" font-size="5.6" font-weight="normal" fill="#e4e4ee" textLength="49" lengthAdjust="spacingAndGlyphs" >in the New Year.</text><use href="#desk" x="21" y="60" width="170" height="135"/><text x="12.4" y="184" font-size="10.4" font-weight="bold" fill="#fff" textLength="35.6" lengthAdjust="spacingAndGlyphs" >simple.</text></g></svg></div><div class="cb"></div><div class="ti">Simple Newsletter Square_Jan23</div><div class="ty">Social</div><div class="id">184026</div></div>
<div class="card" style="left:660.2px;top:295px"><div class="img"><svg class="abs" style="left:-1px;top:-1px" width="200" height="200" viewBox="0 0 200 200" font-family="Liberation Sans, sans-serif"><g transform="translate(-0.2 -0.0)"><rect x="5" y="68.6" width="189.6" height="63" fill="#1e1853"/><svg x="9" y="76" width="136" height="48" viewBox="0 0 136 48" overflow="hidden"><use href="#iso" x="36" y="1" width="64" height="48"/><use href="#pin" x="3" y="8" width="7" height="9"/><use href="#pin" x="28" y="6" width="7" height="9"/><use href="#pin" x="1" y="20" width="7" height="9"/><path d="M8 16 L18 12 L24 15 L14 19 Z" fill="#35c98a" stroke="#3ba0e0" stroke-width=".6"/><path d="M20 14 L28 10 L30 17 L22 21 Z" fill="#3ad98d" stroke="#1c6fb4" stroke-width=".7"/><path d="M6 28 L16 24 L22 27 L12 31 Z" fill="#eef0f6"/><path d="M20 26 L27 23 L32 26 L25 29 Z" fill="#d9dce8"/><use href="#cl" x="25" y="28" width="10" height="9"/><use href="#cl" x="96" y="6" width="10" height="9"/><use href="#cl" x="120" y="10" width="10" height="9"/><path d="M104 12 L112 9 L118 12 L110 15 Z" fill="#e4e6ee"/><path d="M100 37 L106 34 L110 36.6 L104 39.6 Z" fill="#e4e6ee"/><use href="#pin" x="117" y="18" width="6" height="8"/><path d="M122 28 L125 26.6 L126 34 L123 35.4 Z M127 26 L130 24.6 L131 32 L128 33.4 Z M131 23 L134 21.6 L135 29 L132 30.4 Z" fill="#eef0f6"/><path d="M38 14 l2 -1 l1 5 l-2 1z M112 30 l2 -1 l1 4 l-2 1z" fill="#35c98a"/></svg><use href="#lg" x="144.6" y="91.4" width="18" height="18"/><text x="167.4" y="98.4" font-size="3.8" font-weight="bold" fill="#4aa8dc" textLength="14" lengthAdjust="spacingAndGlyphs" >simple.</text><text x="167" y="104.6" font-size="5" font-weight="normal" fill="#f4f4f8" textLength="23" lengthAdjust="spacingAndGlyphs" >Admation</text></g></svg></div><div class="cb"></div><div class="ti">Simple Admation Twitter Header</div><div class="ty">Social</div><div class="id">178450</div></div>
<div class="card" style="left:870.6px;top:295px"><div class="img"><svg class="abs" style="left:-1px;top:-1px" width="200" height="200" viewBox="0 0 200 200" font-family="Liberation Sans, sans-serif"><g transform="translate(-0.6 -0.0)"><rect x="5.4" y="50.4" width="189.6" height="99.6" fill="#1e1853"/><path d="M5.4 50.4 H35 L34 54.4 H13.2 V89 H5.4 Z" fill="#e6284e"/><path d="M5.4 66 L13.2 62 V89 H5.4 Z" fill="#d83a62"/><path d="M5.4 62.4 L9 60.6 L5.4 66 Z" fill="#1e1853"/><path d="M44.6 54.2 L50 50.4 H66 L62 54.2 Z" fill="#c9254a"/><path d="M13.4 102 Q8 106 8.6 114 Q9.4 121 13.4 123.6 Z" fill="#8a5a2a" opacity=".85"/><rect x="13.2" y="54.2" width="174" height="77.8" rx="2" fill="#fff"/><path d="M20.6 131.6 H33.4 L27 138.4 Z" fill="#fff"/><text x="21.4" y="66.6" font-size="3.9" font-weight="normal" fill="#4a466e" textLength="148" lengthAdjust="spacingAndGlyphs" font-style="italic"><tspan fill="#e4274d" font-weight="bold">"</tspan>The toolset available to me as a client-side administrator is vast –</text><text x="23.4" y="72" font-size="3.9" font-weight="normal" fill="#4a466e" textLength="137" lengthAdjust="spacingAndGlyphs" font-style="italic">users, groups, task types, groups and assets – the list goes on!</text><text x="23.4" y="77.4" font-size="3.9" font-weight="normal" fill="#4a466e" textLength="89" lengthAdjust="spacingAndGlyphs" font-style="italic">As an administrator user of Admation.<tspan fill="#e4274d" font-weight="bold">"</tspan></text><text x="21.4" y="88.4" font-size="3.3" font-weight="normal" fill="#77758c" textLength="35.4" lengthAdjust="spacingAndGlyphs" >Favourite Features:</text><text x="59" y="88.4" font-size="3.4" font-weight="bold" fill="#221c5c" textLength="19" lengthAdjust="spacingAndGlyphs" >Workflow</text><text x="59" y="92.95" font-size="3.4" font-weight="bold" fill="#221c5c" textLength="27.6" lengthAdjust="spacingAndGlyphs" >Management,</text><text x="59" y="97.5" font-size="3.4" font-weight="bold" fill="#221c5c" textLength="35" lengthAdjust="spacingAndGlyphs" >User Onboarding,</text><text x="59" y="102.05000000000001" font-size="3.4" font-weight="bold" fill="#221c5c" textLength="36.6" lengthAdjust="spacingAndGlyphs" >Task Management</text><text x="21.4" y="108" font-size="3.3" font-weight="normal" fill="#77758c" textLength="16.4" lengthAdjust="spacingAndGlyphs" >Industry:</text><text x="59" y="108" font-size="3.4" font-weight="bold" fill="#221c5c" textLength="20" lengthAdjust="spacingAndGlyphs" >Marketing</text><text x="59" y="112.6" font-size="3.4" font-weight="bold" fill="#221c5c" textLength="26.4" lengthAdjust="spacingAndGlyphs" >&amp; Advertising</text><text x="105.4" y="89.0" font-size="3.3" font-weight="normal" fill="#77758c" textLength="28.6" lengthAdjust="spacingAndGlyphs" >Overall Quality:</text><polygon points="156.20,85.10 156.82,86.75 158.58,86.83 157.20,87.92 157.67,89.62 156.20,88.65 154.73,89.62 155.20,87.92 153.82,86.83 155.58,86.75" fill="#e4274d"/><polygon points="161.50,85.10 162.12,86.75 163.88,86.83 162.50,87.92 162.97,89.62 161.50,88.65 160.03,89.62 160.50,87.92 159.12,86.83 160.88,86.75" fill="#e4274d"/><polygon points="166.80,85.10 167.42,86.75 169.18,86.83 167.80,87.92 168.27,89.62 166.80,88.65 165.33,89.62 165.80,87.92 164.42,86.83 166.18,86.75" fill="#e4274d"/><polygon points="172.10,85.10 172.72,86.75 174.48,86.83 173.10,87.92 173.57,89.62 172.10,88.65 170.63,89.62 171.10,87.92 169.72,86.83 171.48,86.75" fill="#e4274d"/><polygon points="177.40,85.10 178.02,86.75 179.78,86.83 178.40,87.92 178.87,89.62 177.40,88.65 175.93,89.62 176.40,87.92 175.02,86.83 176.78,86.75" fill="#e4274d"/><text x="105.4" y="95.6" font-size="3.3" font-weight="normal" fill="#77758c" textLength="22.4" lengthAdjust="spacingAndGlyphs" >Ease of Use:</text><polygon points="156.20,91.70 156.82,93.35 158.58,93.43 157.20,94.52 157.67,96.22 156.20,95.25 154.73,96.22 155.20,94.52 153.82,93.43 155.58,93.35" fill="#e4274d"/><polygon points="161.50,91.70 162.12,93.35 163.88,93.43 162.50,94.52 162.97,96.22 161.50,95.25 160.03,96.22 160.50,94.52 159.12,93.43 160.88,93.35" fill="#e4274d"/><polygon points="166.80,91.70 167.42,93.35 169.18,93.43 167.80,94.52 168.27,96.22 166.80,95.25 165.33,96.22 165.80,94.52 164.42,93.43 166.18,93.35" fill="#e4274d"/><polygon points="172.10,91.70 172.72,93.35 174.48,93.43 173.10,94.52 173.57,96.22 172.10,95.25 170.63,96.22 171.10,94.52 169.72,93.43 171.48,93.35" fill="#e4274d"/><polygon points="177.40,91.70 178.02,93.35 179.78,93.43 178.40,94.52 178.87,96.22 177.40,95.25 175.93,96.22 176.40,94.52 175.02,93.43 176.78,93.35" fill="#e4274d"/><text x="105.4" y="102.2" font-size="3.3" font-weight="normal" fill="#77758c" textLength="46.6" lengthAdjust="spacingAndGlyphs" >Features &amp; Functionality:</text><polygon points="156.20,98.30 156.82,99.95 158.58,100.03 157.20,101.12 157.67,102.82 156.20,101.85 154.73,102.82 155.20,101.12 153.82,100.03 155.58,99.95" fill="#e4274d"/><polygon points="161.50,98.30 162.12,99.95 163.88,100.03 162.50,101.12 162.97,102.82 161.50,101.85 160.03,102.82 160.50,101.12 159.12,100.03 160.88,99.95" fill="#e4274d"/><polygon points="166.80,98.30 167.42,99.95 169.18,100.03 167.80,101.12 168.27,102.82 166.80,101.85 165.33,102.82 165.80,101.12 164.42,100.03 166.18,99.95" fill="#e4274d"/><polygon points="172.10,98.30 172.72,99.95 174.48,100.03 173.10,101.12 173.57,102.82 172.10,101.85 170.63,102.82 171.10,101.12 169.72,100.03 171.48,99.95" fill="#e4274d"/><polygon points="177.40,98.30 178.02,99.95 179.78,100.03 178.40,101.12 178.87,102.82 177.40,101.85 175.93,102.82 176.40,101.12 175.02,100.03 176.78,99.95" fill="#e4274d"/><text x="21.2" y="121.4" font-size="6.6" font-weight="bold" fill="#221c5c" textLength="18.4" lengthAdjust="spacingAndGlyphs" >Tim S</text><text x="21.2" y="127.4" font-size="3.5" font-weight="bold" fill="#221c5c" textLength="29.4" lengthAdjust="spacingAndGlyphs" >The Good Guys</text><rect x="132.6" y="118.6" width="46.6" height="9" fill="#1c70b4"/><rect x="177.4" y="118.6" width="1.8" height="9" fill="#e4274d"/><text x="135" y="125.6" font-size="5.6" font-weight="bold" fill="#fff" textLength="40" lengthAdjust="spacingAndGlyphs" >THE GOOD GUYS</text><path d="M13.6 141 L19.4 139.6 L17.4 146.6 L16.6 142.4 Z" fill="#f5a623"/><path d="M16.6 142.4 L19.4 139.6 L17.4 146.6Z" fill="#3a9be0"/><text x="20.4" y="145.4" font-size="5.4" font-weight="bold" fill="#fff" textLength="23" lengthAdjust="spacingAndGlyphs" >Capterra</text><use href="#lg" x="155.4" y="134.6" width="13" height="13"/><text x="171" y="139.4" font-size="2.8" font-weight="bold" fill="#4aa8dc" textLength="10" lengthAdjust="spacingAndGlyphs" >simple.</text><text x="171" y="144.2" font-size="3.8" font-weight="normal" fill="#f4f4f8" textLength="17" lengthAdjust="spacingAndGlyphs" >Admation</text></g></svg></div><div class="cb"></div><div class="ti">Client Review - Facebook_Tim S</div><div class="ty">Social</div><div class="id">178450</div></div>
<div class="card" style="left:1081.0px;top:295px"><div class="img"><svg class="abs" style="left:-1px;top:-1px" width="200" height="200" viewBox="0 0 200 200" font-family="Liberation Sans, sans-serif"><g transform="translate(0 -0.0)"><rect x="5" y="49.2" width="189.6" height="101.6" fill="#1e1853"/><text x="11.4" y="80" font-size="6.3" font-weight="bold" fill="#fff" textLength="60" lengthAdjust="spacingAndGlyphs" >January Edition:</text><text x="11.4" y="87.8" font-size="6.3" font-weight="bold" fill="#fff" textLength="41" lengthAdjust="spacingAndGlyphs" >New Year...</text><text x="11.4" y="95.8" font-size="6.3" font-weight="bold" fill="#fff" textLength="84" lengthAdjust="spacingAndGlyphs" >New Ways of Working!</text><text x="11.4" y="105.6" font-size="3.4" font-weight="normal" fill="#dcdce8" textLength="67.6" lengthAdjust="spacingAndGlyphs" >Unlock new possibilities with a fresh</text><text x="11.4" y="110.6" font-size="3.4" font-weight="normal" fill="#dcdce8" textLength="64.6" lengthAdjust="spacingAndGlyphs" >approach to work in the New Year.</text><text x="11.2" y="135.4" font-size="7.2" font-weight="bold" fill="#fff" textLength="24" lengthAdjust="spacingAndGlyphs" >simple.</text><use href="#desk" x="94.1" y="58.2" width="108.4" height="86"/></g></svg></div><div class="cb"></div><div class="ti">Simple Newsletter Header_Jan23</div><div class="ty">Social</div><div class="id">184025</div></div>
<div class="card" style="left:1291.4px;top:295px"><div class="img"><svg class="abs" style="left:-1px;top:-1px" width="200" height="200" viewBox="0 0 200 200" font-family="Liberation Sans, sans-serif"><g transform="translate(-0.4 -0.0)"><rect x="5.2" y="67.8" width="189.8" height="64.4" fill="#5a537e"/><g transform="translate(12 73.4) scale(0.2842 0.2851)"><rect x="0" y="0" width="134.4" height="188" fill="#fff"/><rect x="0" y="0" width="134.4" height="28" fill="#f3f3f6"/><path d="M10.4 10 L15 13.4 L10.4 16.8 Z" fill="none" stroke="#c8283c" stroke-width=".9"/><text x="18.6" y="13" font-size="5.2" font-weight="bold" fill="#c4122f" textLength="28" lengthAdjust="spacingAndGlyphs" >Bendigo<tspan fill="#9a9a9a" font-weight="normal">and</tspan></text><text x="18.6" y="18.6" font-size="5.2" font-weight="bold" fill="#c4122f" textLength="33" lengthAdjust="spacingAndGlyphs" >Adelaide<tspan fill="#9a9a9a" font-weight="normal">Bank</tspan></text><use href="#lg" x="90" y="7.4" width="13.6" height="13.6"/><text x="107.6" y="12.2" font-size="3.6" font-weight="bold" fill="#4aa8dc" >simple.</text><text x="107.4" y="17.4" font-size="4.4" font-weight="normal" fill="#555" textLength="18" lengthAdjust="spacingAndGlyphs" >Admation</text><text x="9.6" y="39.6" font-size="6.3" font-weight="bold" fill="#221c5c" textLength="81" lengthAdjust="spacingAndGlyphs" >Simple Admation helped</text><text x="9.6" y="47.6" font-size="6.3" font-weight="bold" fill="#221c5c" textLength="91" lengthAdjust="spacingAndGlyphs" >Bendigo and Adelaide Bank</text><text x="9.6" y="55.8" font-size="6.3" font-weight="bold" fill="#221c5c" textLength="114" lengthAdjust="spacingAndGlyphs" >Streamline its Marketing Processes</text><rect x="9.6" y="62.00" width="54" height="0.8" fill="#bdbdc6"/><rect x="9.6" y="64.50" width="54" height="0.8" fill="#bdbdc6"/><rect x="9.6" y="67.00" width="54" height="0.8" fill="#bdbdc6"/><rect x="9.6" y="69.50" width="44" height="0.8" fill="#bdbdc6"/><rect x="9.6" y="78.00" width="53" height="0.8" fill="#bdbdc6"/><rect x="9.6" y="80.50" width="53" height="0.8" fill="#bdbdc6"/><rect x="9.6" y="83.00" width="53" height="0.8" fill="#bdbdc6"/><rect x="9.6" y="85.50" width="30" height="0.8" fill="#bdbdc6"/><rect x="70" y="62.00" width="50" height="0.8" fill="#bdbdc6"/><rect x="70" y="64.60" width="50" height="0.8" fill="#bdbdc6"/><rect x="70" y="67.20" width="50" height="0.8" fill="#bdbdc6"/><rect x="70" y="69.80" width="50" height="0.8" fill="#bdbdc6"/><rect x="70" y="72.40" width="50" height="0.8" fill="#bdbdc6"/><rect x="70" y="75.00" width="50" height="0.8" fill="#bdbdc6"/><rect x="70" y="77.60" width="14" height="0.8" fill="#bdbdc6"/><rect x="9.6" y="95" width="115" height="18.6" fill="#5d5683"/><rect x="13" y="101.00" width="108" height="0.7" fill="#8c86ad"/><rect x="13" y="103.30" width="108" height="0.7" fill="#8c86ad"/><rect x="13" y="105.60" width="40" height="0.7" fill="#8c86ad"/><rect x="0" y="119" width="134.4" height="57" fill="#1e1853"/><svg x="0" y="119" width="134.4" height="57" viewBox="0 0 134.4 57"><use href="#iso" x="9" y="-16" width="94" height="70.5"/><use href="#cl" x="124" y="8" width="12" height="10"/><use href="#cl" x="1" y="36" width="11" height="9"/><use href="#cl" x="110" y="2" width="10" height="8"/><path d="M0 12 L6 9 L9 20 L0 24 Z" fill="#e0a23a"/><path d="M0 15 L5 13 L7 19 L0 22 Z" fill="#3aa0e2"/><path d="M100 9 L108 5.6 L114 9 L106 12.4 Z" fill="#dfe3ee"/><g fill="#eef0f6" stroke="#6f86b8" stroke-width=".4"><path d="M118 34 l3.4 -1.4 l1 7 l-3.4 1.4z M123 30 l3.4 -1.4 l1 7 l-3.4 1.4z M128 36 l3.4 -1.4 l1 7 l-3.4 1.4z M122 41 l3.4 -1.4 l1 7 l-3.4 1.4z"/></g><path d="M18 22 l2.4 -1 l1 5 l-2.4 1z" fill="#35c98a"/><path d="M115 20 l3 -1.2 l1 6 l-3 1.2z" fill="#35c98a"/></svg><rect x="0" y="176" width="134.4" height="12" fill="#f3f3f6"/><rect x="10" y="181.6" width="88" height=".8" fill="#8a8a96"/><text x="106" y="184" font-size="5.6" font-weight="bold" fill="#221c5c" textLength="18" lengthAdjust="spacingAndGlyphs" >simple.</text></g><rect x="57.2" y="73.4" width=".6" height="53.4" fill="#8d87ab"/><text x="64.6" y="90.6" font-size="6.1" font-weight="bold" fill="#f4f3fa" textLength="100.4" lengthAdjust="spacingAndGlyphs" >Simple Admation Case Study:</text><text x="64.6" y="98.6" font-size="6.1" font-weight="bold" fill="#f4f3fa" textLength="94.6" lengthAdjust="spacingAndGlyphs" >Bendigo and Adelaide Bank</text><rect x="64.6" y="107.2" width="100" height="9.4" fill="none" stroke="#a8a3c4" stroke-width=".5"/><text x="69.8" y="113.8" font-size="3.9" font-weight="bold" fill="#f4f3fa" textLength="90" lengthAdjust="spacingAndGlyphs" >DOWNLOAD <tspan font-weight="normal" fill="#c9c5de">OUR</tspan> CASE STUDY <tspan font-weight="normal" fill="#c9c5de">NOW</tspan></text></g></svg></div><div class="cb"></div><div class="ti">Bendigo and Adelaide Bank Ca...</div><div class="ty">Banner</div><div class="id">178245</div></div>
<div class="card r2" style="left:29.0px;top:553.5px;height:248.5px"><div class="img"><svg class="abs" style="left:-1px;top:-1px" width="200" height="200" viewBox="0 0 200 200" font-family="Liberation Sans, sans-serif"><g transform="translate(0 -0.5)"><rect x="5" y="68" width="189.6" height="64.6" fill="#5a537e"/><rect x="11.8" y="73.8" width="38.2" height="54" fill="#fff"/><rect x="13" y="75" width="35.8" height="51.6" fill="#231c66"/><use href="#lg" x="15.4" y="77.6" width="6" height="6"/><text x="15.4" y="88.2" font-size="2.3" font-weight="bold" fill="#fff" textLength="28" lengthAdjust="spacingAndGlyphs" >How Admation Can Carry</text><text x="15.4" y="91" font-size="2.3" font-weight="bold" fill="#fff" textLength="24.4" lengthAdjust="spacingAndGlyphs" >Your Marketing Team</text><text x="15.4" y="93.8" font-size="2.3" font-weight="bold" fill="#fff" textLength="22" lengthAdjust="spacingAndGlyphs" >During a Recession</text><path d="M22 108 L36 102 L42 106 L40 116 L26 120 Z" fill="#5a3fd0"/><path d="M24 104 l6 -2.4 l4 2 l-6 2.4z" fill="#35c98a"/><circle cx="24.6" cy="113.6" r="1.6" fill="#f3c23c"/><path d="M18.6 101 l1.6 -.6 l.6 4 l-1.6 .6z M37.4 108 l2 -.8 l.8 6 l-2 .8z" fill="#35c98a"/><use href="#cl" x="24" y="98" width="9" height="8"/><use href="#cl" x="39" y="100" width="9" height="8"/><use href="#cl" x="14" y="111" width="8" height="7"/><use href="#cl" x="31" y="116" width="9" height="8"/><rect x="57.2" y="73.6" width=".6" height="53.4" fill="#8d87ab"/><text x="64.4" y="90.8" font-size="6.1" font-weight="bold" fill="#f4f3fa" textLength="102.4" lengthAdjust="spacingAndGlyphs" >How Admation Can Carry Your</text><text x="64.4" y="98.8" font-size="6.1" font-weight="bold" fill="#f4f3fa" textLength="121" lengthAdjust="spacingAndGlyphs" >Marketing Team During a Recession</text><rect x="64.4" y="107.4" width="86.4" height="10" fill="none" stroke="#a8a3c4" stroke-width=".5"/><text x="68.6" y="114.2" font-size="3.9" font-weight="bold" fill="#f4f3fa" textLength="78" lengthAdjust="spacingAndGlyphs" >DOWNLOAD <tspan font-weight="normal" fill="#c9c5de">YOUR</tspan> GUIDE <tspan font-weight="normal" fill="#c9c5de">NOW</tspan></text></g></svg></div><div class="cb"></div><div class="ti">How Admation Can Carry Your...</div><div class="ty">Banner</div><div class="id">182456</div></div>
<div class="card r2" style="left:239.4px;top:553.5px;height:248.5px"><div class="img"><svg class="abs" style="left:-1px;top:-1px" width="200" height="200" viewBox="0 0 200 200" font-family="Liberation Sans, sans-serif"><g transform="translate(-0.4 -0.5)"><defs><filter id="b9" x="-20%" y="-20%" width="140%" height="140%"><feGaussianBlur stdDeviation="1.1"/></filter><clipPath id="c9"><rect x="33" y="6" width="134.4" height="165.4"/></clipPath></defs><g clip-path="url(#c9)"><rect x="33" y="6" width="134.4" height="165.4" fill="#c9a887"/><g filter="url(#b9)"><rect x="33" y="6" width="28" height="30" fill="#e3e3e8"/><rect x="40" y="6" width="8" height="22" fill="#5a5a60"/><path d="M60 6 H132 L138 60 L146 171 H58 L56 100 Z" fill="#cfae8c"/><path d="M76 40 L82 171 M100 6 L112 171 M124 6 L134 100" stroke="#b99572" stroke-width="1.2" fill="none"/><path d="M33 26 Q44 22 54 34 Q60 50 54 70 L50 96 L33 100 Z" fill="#2b2522"/><path d="M33 60 Q40 58 44 70 L46 96 L33 104 Z" fill="#1f1b1a"/><path d="M33 96 L64 86 L74 96 L50 104 L44 116 L33 118 Z" fill="#c79270"/><path d="M33 104 L50 100 L56 112 L40 118 L33 116 Z" fill="#4a3424"/><rect x="33" y="116" width="26" height="56" fill="#e3e4ea"/><path d="M33 136 Q46 130 62 130 L60 146 Q46 148 33 152 Z" fill="#8e9cc0"/><path d="M58 130 L88 124 L90 130 L62 138 Z" fill="#d9b090"/><path d="M33 150 L56 152 L58 171 H33 Z" fill="#c9cad4"/><path d="M100 18 L130 16 L132 38 L102 40 Z" fill="#eceef4"/><path d="M132 6 H167.4 V40 L150 46 L138 40 Z" fill="#dfe1e8"/><path d="M140 6 H160 L158 34 L146 38 Z" fill="#222228"/><path d="M152 26 Q162 22 167.4 30 V56 L150 50 Z" fill="#c99a6a"/><path d="M120 36 Q140 28 152 46 L167.4 60 V96 L150 90 L128 82 Z" fill="#c6d1ea"/><path d="M138 62 L150 58 L167.4 84 V96 L140 88 Z" fill="#2c2f52"/><path d="M104 42 L124 34 L128 40 L108 50 Z" fill="#ddb394"/><path d="M98 50 L128 44 L136 68 L106 76 Z" fill="#c4c5cc"/><path d="M102 54 L122 50 L126 64 L106 68 Z" fill="#3a3a40"/><path d="M108 70 L130 64 L134 72 L112 78 Z" fill="#ddb394"/><path d="M62 92 L92 84 L96 96 L68 104 Z" fill="#c9cad0"/><path d="M72 94 L90 89 L92 96 L74 101 Z" fill="#38383e"/><path d="M78 50 L96 46 L100 62 L84 66 Z" fill="#d6d7de"/><circle cx="97" cy="96" r="5.4" fill="#e9e4e0"/><circle cx="97" cy="96" r="3.4" fill="#c9a688"/><circle cx="86.6" cy="108" r="6" fill="#ecebee"/><circle cx="86.6" cy="108" r="3.8" fill="#d9d5d8"/><path d="M107 98 L128 84 L138 98 L117 113 Z" fill="#2b2c58"/><path d="M142 94 Q156 86 167.4 94 V128 L150 124 Z" fill="#a9552e"/><path d="M146 100 Q158 96 167.4 104 V124 L154 120 Z" fill="#7c3f26"/><path d="M140 124 L167.4 128 V171 H150 L146 146 Z" fill="#c4632e"/><path d="M146 128 L160 126 L164 158 L150 156 Z" fill="#33323c"/><path d="M152 160 L167.4 152 V171 H154 Z" fill="#4a5a9a"/><path d="M118 124 L142 112 L150 122 L128 134 Z" fill="#ddb394"/><path d="M94 130 L128 118 L140 142 L106 152 Z" fill="#e2e3ea"/><path d="M108 122 L124 118 L128 132 L112 136 Z" fill="#15151a"/><path d="M120 134 L138 128 L144 140 L132 146 Z" fill="#ddb394"/><path d="M62 138 L88 130 L90 150 L64 156 Z" fill="#d5d6de"/><path d="M92 150 L118 140 L150 171 H112 Z" fill="#cbccd4"/><path d="M100 152 L118 146 L136 168 L118 171 Z" fill="#2e2e34"/><path d="M92 146 L98 144 L114 171 H106 Z" fill="#55565e"/><path d="M66 166 L90 156 L100 171 H68 Z" fill="#dcdde4"/><path d="M76 168 L90 162 L96 171 H78 Z" fill="#26262c"/><path d="M88 30 Q96 26 102 34 M92 36 Q98 40 104 36" stroke="#3a3a44" stroke-width=".8" fill="none"/></g><rect x="33" y="6" width="134.4" height="165.4" fill="#fff" opacity=".1"/></g><text x="46.8" y="48.2" font-size="6.6" font-weight="bold" fill="#fff" textLength="68.6" lengthAdjust="spacingAndGlyphs" >THE ESSENTIAL</text><text x="46.8" y="58.6" font-size="6.6" font-weight="bold" fill="#fff" textLength="68" lengthAdjust="spacingAndGlyphs" >BUYERS GUIDE</text><text x="46.8" y="69.0" font-size="6.6" font-weight="bold" fill="#fff" textLength="56.6" lengthAdjust="spacingAndGlyphs" >TO PROJECT</text><text x="46.8" y="79.4" font-size="6.6" font-weight="bold" fill="#fff" textLength="67.8" lengthAdjust="spacingAndGlyphs" >MANAGEMENT</text><text x="46.8" y="89.80000000000001" font-size="6.6" font-weight="bold" fill="#fff" textLength="51" lengthAdjust="spacingAndGlyphs" >SOFTWARE</text><rect x="33" y="171" width="134.4" height="24" fill="#1e1853"/><use href="#lg" x="46" y="176.4" width="13" height="13"/><text x="63" y="181.6" font-size="2.8" font-weight="bold" fill="#4aa8dc" textLength="10" lengthAdjust="spacingAndGlyphs" >simple.</text><text x="63" y="186.4" font-size="3.8" font-weight="normal" fill="#e8e8f2" textLength="17" lengthAdjust="spacingAndGlyphs" >Admation</text></g></svg></div><div class="cb"></div><div class="ti">The Essential Buyers Guide to...</div><div class="ty">Whitepaper</div><div class="id">184705</div></div>
<div class="card r2" style="left:449.8px;top:553.5px;height:248.5px"><div class="img"><svg class="abs" style="left:-1px;top:-1px" width="200" height="200" viewBox="0 0 200 200" font-family="Liberation Sans, sans-serif"><g transform="translate(-0.8 -0.5)"><defs><filter id="b10" x="-20%" y="-20%" width="140%" height="140%"><feGaussianBlur stdDeviation="1.6"/></filter><clipPath id="c10"><rect x="33.2" y="6" width="134.4" height="165.4"/></clipPath><linearGradient id="g10" x1="0" y1="0" x2="0" y2="1"><stop offset="0" stop-color="#a9abb9"/><stop offset=".55" stop-color="#a3a3b0"/><stop offset=".8" stop-color="#d2d2da"/><stop offset="1" stop-color="#dedee4"/></linearGradient></defs><g clip-path="url(#c10)"><rect x="33.6" y="6" width="134" height="165.4" fill="url(#g10)"/><g filter="url(#b10)"><rect x="112" y="6" width="56" height="54" fill="#8f98b4"/><rect x="126" y="14" width="26" height="34" fill="#7f88ac"/><rect x="150" y="20" width="18" height="30" fill="#b9bccb"/><path d="M104 40 H168 V52 H104 Z" fill="#c3c4d0"/><path d="M110 56 H168 V70 H110 Z" fill="#9a9cae"/><path d="M33.6 40 L52 34 L66 116 L33.6 136 Z" fill="#565866"/><path d="M33.6 6 H60 L52 34 L33.6 40 Z" fill="#8d8f9e"/><path d="M48 40 L60 36 L72 100 L62 108 Z" fill="#bfc0cc"/><path d="M56 12 L132 10 L142 30 L86 44 L64 36 Z" fill="#dddde5"/><path d="M33.6 18 Q60 12 88 22 Q96 30 84 36 Q60 42 33.6 36 Z" fill="#dcb9a6"/><path d="M76 36 Q86 30 98 38 L92 46 L80 44 Z" fill="#b98a6c"/><path d="M100 76 Q120 66 146 72 L168 84 V98 L140 94 L112 88 Z" fill="#e6c6b2"/><path d="M84 84 L112 80 L114 84 L86 88 Z" fill="#c9a890"/><path d="M120 82 L136 78 L142 92 L124 96 Z" fill="#ebe8ea"/><path d="M140 96 Q156 92 168 98 V122 L146 116 Z" fill="#5f7fb6"/><path d="M150 100 Q160 100 168 106 V118 L152 112 Z" fill="#3f8fc0"/><path d="M72 118 Q90 108 112 112 Q132 108 150 114 L168 124 V136 L120 134 L78 130 Z" fill="#dfbca8"/><path d="M66 124 Q84 116 104 122 L100 132 L70 132 Z" fill="#6a5a5c"/><path d="M110 118 Q130 112 150 120 L146 130 L114 130 Z" fill="#e9cbb8"/><path d="M40 134 L130 130 L168 140 V150 L40 146 Z" fill="#c9cad4"/><path d="M40 118 L60 114 L62 134 L42 138 Z" fill="#6a6c80"/><path d="M40 140 L140 144 L136 148 L40 146 Z" fill="#6f7080"/><rect x="33.6" y="148" width="134" height="24" fill="#dcdce3"/><path d="M76 152 L130 150 L150 156 L80 158 Z" fill="#b9bac6"/><path d="M130 162 L150 158 L166 158 L166 164 L132 168 Z" fill="#d9b84a"/><path d="M148 159 L167 156 L167 162 L150 164 Z" fill="#5a5a64"/><ellipse cx="86" cy="164" rx="15" ry="2.6" fill="#c9824a"/><circle cx="139" cy="128" r="2" fill="#e24a5a"/></g><rect x="33" y="6" width="135" height="165.4" fill="#fff" opacity=".16"/></g><text x="50.4" y="48.2" font-size="6.6" font-weight="bold" fill="#fff" textLength="53.4" lengthAdjust="spacingAndGlyphs" >A GUIDE TO</text><text x="50.4" y="58.6" font-size="6.6" font-weight="bold" fill="#fff" textLength="58" lengthAdjust="spacingAndGlyphs" >EVALUATING</text><text x="50.4" y="69.0" font-size="6.6" font-weight="bold" fill="#fff" textLength="35" lengthAdjust="spacingAndGlyphs" >ONLINE</text><text x="50.4" y="79.4" font-size="6.6" font-weight="bold" fill="#fff" textLength="50" lengthAdjust="spacingAndGlyphs" >PROOFING</text><text x="50.4" y="89.80000000000001" font-size="6.6" font-weight="bold" fill="#fff" textLength="51" lengthAdjust="spacingAndGlyphs" >SOFTWARE</text><rect x="33.2" y="171" width="134.4" height="24" fill="#1e1853"/><use href="#lg" x="46.2" y="176.4" width="13" height="13"/><text x="63.2" y="181.6" font-size="2.8" font-weight="bold" fill="#4aa8dc" textLength="10" lengthAdjust="spacingAndGlyphs" >simple.</text><text x="63.2" y="186.4" font-size="3.8" font-weight="normal" fill="#e8e8f2" textLength="17" lengthAdjust="spacingAndGlyphs" >Admation</text></g></svg></div><div class="cb"></div><div class="ti">Evaluating Online Proofing Sof...</div><div class="ty">Whitepaper</div><div class="id">188065</div></div>
<div class="card r2" style="left:660.2px;top:553.5px;height:248.5px"><div class="img"><svg class="abs" style="left:-1px;top:-1px" width="200" height="200" viewBox="0 0 200 200" font-family="Liberation Sans, sans-serif"><g transform="translate(-0.2 -0.5)"><rect x="33" y="6" width="134.4" height="189" fill="#fff"/><rect x="33" y="62" width="134.4" height="13.400000000000006" fill="#e7e7ea"/><rect x="33" y="96.6" width="134.4" height="13.400000000000006" fill="#e7e7ea"/><rect x="33" y="131.2" width="134.4" height="13.600000000000023" fill="#e7e7ea"/><rect x="33" y="162.8" width="134.4" height="17.19999999999999" fill="#e7e7ea"/><text x="74" y="14.2" font-size="2.2" font-weight="bold" fill="#555" textLength="52" lengthAdjust="spacingAndGlyphs" >CHECKLIST TO DETERMINE IF YOU'RE</text><text x="67" y="16.8" font-size="2.2" font-weight="bold" fill="#555" textLength="66" lengthAdjust="spacingAndGlyphs" >READY FOR PROJECT MANAGEMENT SOLUTION</text><rect x="49.4" y="19" width="100.6" height=".5" fill="#bcd3ea"/><rect x="49.4" y="39" width="100.6" height=".5" fill="#bcd3ea"/><rect x="49.4" y="24" width="92" height=".9" fill="#7a7a84"/><rect x="49.4" y="30.40" width="98" height="0.8" fill="#b0b0b8"/><rect x="49.4" y="33.60" width="68" height="0.8" fill="#b0b0b8"/><rect x="49.4" y="46" width="96" height=".9" fill="#85858f"/><rect x="51.6" y="49.2" width="62" height=".9" fill="#85858f"/><rect x="49.4" y="54.60000000000001" width=".7" height="2.4" fill="#6aa7dc"/><rect x="52.8" y="55.400000000000006" width="5.199999999999999" height=".9" fill="#a9a9b2"/><rect x="66" y="54.60000000000001" width=".7" height="2.4" fill="#6aa7dc"/><rect x="69.4" y="55.400000000000006" width="5.199999999999999" height=".9" fill="#a9a9b2"/><rect x="82.4" y="54.60000000000001" width=".7" height="2.4" fill="#6aa7dc"/><rect x="85.80000000000001" y="55.400000000000006" width="12.6" height=".9" fill="#a9a9b2"/><rect x="49.4" y="65" width="88" height=".9" fill="#85858f"/><rect x="49.4" y="70.4" width=".7" height="2.4" fill="#6aa7dc"/><rect x="52.8" y="71.2" width="5.199999999999999" height=".9" fill="#a9a9b2"/><rect x="66" y="70.4" width=".7" height="2.4" fill="#6aa7dc"/><rect x="69.4" y="71.2" width="5.199999999999999" height=".9" fill="#a9a9b2"/><rect x="82.4" y="70.4" width=".7" height="2.4" fill="#6aa7dc"/><rect x="85.80000000000001" y="71.2" width="12.6" height=".9" fill="#a9a9b2"/><rect x="49.4" y="81" width="90" height=".9" fill="#85858f"/><rect x="51.6" y="84.2" width="24" height=".9" fill="#85858f"/><rect x="49.4" y="89.60000000000001" width=".7" height="2.4" fill="#6aa7dc"/><rect x="52.8" y="90.4" width="5.199999999999999" height=".9" fill="#a9a9b2"/><rect x="66" y="89.60000000000001" width=".7" height="2.4" fill="#6aa7dc"/><rect x="69.4" y="90.4" width="5.199999999999999" height=".9" fill="#a9a9b2"/><rect x="82.4" y="89.60000000000001" width=".7" height="2.4" fill="#6aa7dc"/><rect x="85.80000000000001" y="90.4" width="12.6" height=".9" fill="#a9a9b2"/><rect x="49.4" y="99.6" width="92" height=".9" fill="#85858f"/><rect x="49.4" y="105.0" width=".7" height="2.4" fill="#6aa7dc"/><rect x="52.8" y="105.8" width="5.199999999999999" height=".9" fill="#a9a9b2"/><rect x="66" y="105.0" width=".7" height="2.4" fill="#6aa7dc"/><rect x="69.4" y="105.8" width="5.199999999999999" height=".9" fill="#a9a9b2"/><rect x="82.4" y="105.0" width=".7" height="2.4" fill="#6aa7dc"/><rect x="85.80000000000001" y="105.8" width="12.6" height=".9" fill="#a9a9b2"/><rect x="49.4" y="115.6" width="93" height=".9" fill="#85858f"/><rect x="51.6" y="118.8" width="14" height=".9" fill="#85858f"/><rect x="49.4" y="124.2" width=".7" height="2.4" fill="#6aa7dc"/><rect x="52.8" y="125.0" width="5.199999999999999" height=".9" fill="#a9a9b2"/><rect x="66" y="124.2" width=".7" height="2.4" fill="#6aa7dc"/><rect x="69.4" y="125.0" width="5.199999999999999" height=".9" fill="#a9a9b2"/><rect x="82.4" y="124.2" width=".7" height="2.4" fill="#6aa7dc"/><rect x="85.80000000000001" y="125.0" width="12.6" height=".9" fill="#a9a9b2"/><rect x="49.4" y="134.4" width="72" height=".9" fill="#85858f"/><rect x="49.4" y="139.79999999999998" width=".7" height="2.4" fill="#6aa7dc"/><rect x="52.8" y="140.6" width="5.199999999999999" height=".9" fill="#a9a9b2"/><rect x="66" y="139.79999999999998" width=".7" height="2.4" fill="#6aa7dc"/><rect x="69.4" y="140.6" width="5.199999999999999" height=".9" fill="#a9a9b2"/><rect x="82.4" y="139.79999999999998" width=".7" height="2.4" fill="#6aa7dc"/><rect x="85.80000000000001" y="140.6" width="12.6" height=".9" fill="#a9a9b2"/><rect x="49.4" y="150" width="84" height=".9" fill="#85858f"/><rect x="49.4" y="155.39999999999998" width=".7" height="2.4" fill="#6aa7dc"/><rect x="52.8" y="156.2" width="5.199999999999999" height=".9" fill="#a9a9b2"/><rect x="66" y="155.39999999999998" width=".7" height="2.4" fill="#6aa7dc"/><rect x="69.4" y="156.2" width="5.199999999999999" height=".9" fill="#a9a9b2"/><rect x="82.4" y="155.39999999999998" width=".7" height="2.4" fill="#6aa7dc"/><rect x="85.80000000000001" y="156.2" width="12.6" height=".9" fill="#a9a9b2"/><rect x="49.4" y="165.8" width="90" height=".9" fill="#85858f"/><rect x="51.6" y="169.0" width="60" height=".9" fill="#85858f"/><rect x="49.4" y="174.39999999999998" width=".7" height="2.4" fill="#6aa7dc"/><rect x="52.8" y="175.2" width="5.199999999999999" height=".9" fill="#a9a9b2"/><rect x="66" y="174.39999999999998" width=".7" height="2.4" fill="#6aa7dc"/><rect x="69.4" y="175.2" width="5.199999999999999" height=".9" fill="#a9a9b2"/><rect x="82.4" y="174.39999999999998" width=".7" height="2.4" fill="#6aa7dc"/><rect x="85.80000000000001" y="175.2" width="12.6" height=".9" fill="#a9a9b2"/><use href="#lg" x="46" y="184.6" width="8.4" height="8.4"/><text x="56.6" y="188.4" font-size="1.9" font-weight="bold" fill="#4aa8dc" >simple.</text><text x="56.6" y="191.2" font-size="2.4" font-weight="normal" fill="#777" >Admation</text><rect x="137" y="189.8" width="16" height=".8" fill="#a9a9b2"/></g></svg></div><div class="cb"></div><div class="ti">Checklist to Determine if Read...</div><div class="ty">Whitepaper</div><div class="id">177046</div></div>
<div class="card r2" style="left:870.6px;top:553.5px;height:248.5px"><div class="img"><svg class="abs" style="left:-1px;top:-1px" width="200" height="200" viewBox="0 0 200 200" font-family="Liberation Sans, sans-serif"><g transform="translate(-0.6 -0.5)"><rect x="5.4" y="47" width="189.6" height="107" fill="#1e1853"/><svg x="5.4" y="76" width="190" height="48" viewBox="0 0 1530 387"><path d="M135 95 L175 110 L175 160 L135 145 Z" fill="#34e0a0"/><path d="M170 90 L290 150 L290 215 L170 155 Z" fill="#6a3fd8"/><path d="M178 118 L296 176 L296 226 L178 168 Z" fill="#3fd8d0"/><path d="M196 136 L250 162 L250 204 L196 178 Z" fill="#2fb8c8"/><path d="M206 150 L232 172 L206 184 Z" fill="#f3c23c"/><path d="M255 190 L290 206 L290 226 L255 210 Z" fill="#34e0a0"/><circle cx="60" cy="165" r="22" fill="none" stroke="#d9903a" stroke-width="9"/><circle cx="60" cy="165" r="9" fill="#6a3fd8"/><path d="M62 196 L118 178 L128 232 L72 250 Z" fill="#dfe3ee"/><path d="M70 200 L112 186 L120 226 L78 240 Z" fill="#34d68a"/><path d="M44 244 L72 250 L128 232 L104 224 Z" fill="#c3c7d6"/><path d="M140 150 l16 -6 l4 30 l-16 6z M148 220 l10 -4 l3 24 l-10 4z" fill="#c9a23a"/><use href="#cl" x="84.0" y="110.92" width="56" height="48.16"/><use href="#cl" x="50.0" y="253.64" width="52" height="44.72"/><use href="#cl" x="206.0" y="237.92000000000002" width="56" height="48.16"/><g stroke="#3a3880" stroke-width="3" fill="none"><path d="M150 260 Q180 290 215 270 M30 120 L60 100"/></g><path d="M616 196 L668 166 L712 190 L700 232 L650 256 L612 232 Z" fill="#c98a2e"/><path d="M630 200 L666 180 L694 196 L660 216 Z" fill="#f0d9a8"/><path d="M650 216 L690 198 L690 226 L652 244 Z" fill="#2f7fd0"/><path d="M676 132 L716 146 L722 196 L684 182 Z" fill="#dfe3ee"/><path d="M684 142 L712 152 L716 186 L690 176 Z" fill="#9aa6c8"/><path d="M600 118 L636 128 L628 144 L594 134 Z" fill="#e9a93a"/><path d="M570 176 l10 -4 l4 30 l-10 4z" fill="#35c98a"/><path d="M730 176 l8 4 l12 32 l-8 -4z" fill="#c9a23a"/><use href="#cl" x="565.0" y="106.5" width="50" height="43.0"/><use href="#cl" x="577.0" y="214.5" width="50" height="43.0"/><use href="#cl" x="715.0" y="212.5" width="50" height="43.0"/><use href="#cl" x="620.0" y="182.8" width="40" height="34.4"/><g fill="#3fd0e8"><circle cx="706" cy="262" r="5"/><circle cx="770" cy="118" r="4"/></g><path d="M796 170 L884 122 L902 146 L814 194 Z" fill="#7a5ad8"/><path d="M814 194 L902 146 L902 160 L814 208 Z" fill="#4a3a9a"/><ellipse cx="806" cy="184" rx="10" ry="16" fill="#bfc4e8"/><g stroke="#cfd0f0" stroke-width="4"><path d="M832 152 l8 24 M852 142 l8 24 M872 130 l8 24"/></g><g fill="#f3c23c"><path d="M902 92 L924 104 L924 140 L902 128 Z"/><path d="M934 136 L954 146 L954 176 L934 166 Z"/><path d="M968 112 L988 122 L984 150 L966 140 Z"/><path d="M876 258 l14 6 v22 l-14 -6z"/></g><path d="M820 196 L878 170 L878 228 L820 254 Z" fill="#2fd68a" stroke="#2378c4" stroke-width="5"/><path d="M834 204 l20 -8 v20 l-20 8z" fill="#e9ebf3"/><path d="M926 210 L984 184 L1062 226 L1004 254 Z" fill="#e4e8f4"/><path d="M944 212 L984 194 L1042 226 L1002 244 Z" fill="#6fb6ea"/><path d="M966 214 L986 206 L1022 226 L1002 234 Z" fill="#27307a"/><path d="M926 210 L1004 254 L1004 268 L926 224 Z" fill="#aab4d0"/><path d="M978 158 l22 -10 l10 18 l-22 10z" fill="#34d6a0"/><path d="M1012 142 l14 -6 l6 22 l-14 6z" fill="#c9823a"/><path d="M1016 150 l10 -4 l4 12 l-10 4z" fill="#3b6fd0"/><use href="#cl" x="817.0" y="238.5" width="50" height="43.0"/><g stroke="#3a3880" stroke-width="3" fill="none"><path d="M990 100 Q1040 80 1070 120 M760 200 L800 230 M900 240 Q910 270 940 270 M1060 140 L1090 120"/></g><g fill="#f3c23c"><path d="M1088 160 L1176 204 L1176 222 L1088 178 Z"/><path d="M1090 190 L1178 234 L1178 252 L1090 208 Z"/><path d="M1094 220 L1180 264 L1180 280 L1094 236 Z"/></g><g fill="#2a2a6a"><path d="M1088 178 L1176 222 L1178 234 L1090 190 Z"/><path d="M1090 208 L1178 252 L1180 264 L1094 220 Z"/></g><path d="M1140 168 L1222 128 L1232 150 L1216 196 L1160 204 Z" fill="#3fa6ea"/><path d="M1190 150 L1222 128 L1232 150 L1216 196 Z" fill="#2378c4"/><g fill="#f0a030"><path d="M1166 112 L1184 96 L1192 130 L1174 138 Z"/><path d="M1196 110 L1216 100 L1224 132 L1204 140 Z"/></g><path d="M1226 192 L1250 200 L1250 244 L1226 236 Z" fill="#e9ebf3"/><path d="M1096 130 l16 -6 l4 12 l-16 6z" fill="#3b8fd6"/><use href="#cl" x="1104.0" y="129.64" width="52" height="44.72"/><ellipse cx="1350" cy="200" rx="56" ry="30" fill="#34d68a"/><ellipse cx="1350" cy="206" rx="56" ry="28" fill="#1fa86a" opacity=".5"/><g fill="#f3c23c" stroke="#8a6a1a" stroke-width="2"><path d="M1306 186 l18 -8 l4 34 l-18 8z"/><path d="M1332 174 l18 -8 l4 34 l-18 8z"/><path d="M1358 164 l18 -8 l4 34 l-18 8z"/><path d="M1384 156 l14 -6 l4 30 l-14 6z"/></g><path d="M1256 138 L1290 126 L1308 140 L1274 154 Z" fill="#e9a93a"/><path d="M1270 140 L1288 134 L1296 140 L1278 146 Z" fill="#27307a"/><path d="M1346 262 L1380 250 L1396 262 L1362 276 Z" fill="#e9a93a"/><path d="M1392 222 L1416 214 L1424 240 L1400 248 Z" fill="#dfe3ee"/><path d="M1400 224 l12 -4 l4 14 l-12 4z" fill="#e9a93a"/><g fill="#35c9a8"><path d="M1414 122 l10 -4 l4 22 l-10 4z"/><path d="M1436 176 l10 -4 l4 26 l-10 4z"/><path d="M1262 210 l12 6 l-4 14 l-10 -6z"/></g><circle cx="1468" cy="120" r="5" fill="#3b6fd0"/><use href="#cl" x="1270.0" y="243.64" width="52" height="44.72"/><use href="#cl" x="1272.0" y="172.8" width="40" height="34.4"/><g stroke="#3a3880" stroke-width="3" fill="none"><path d="M1240 260 Q1260 290 1290 286 M1420 150 Q1450 140 1470 160 M1430 250 L1460 262"/></g></svg><text x="46.4" y="102" font-size="7.6" font-weight="bold" fill="#f2f2f8" textLength="24.8" lengthAdjust="spacingAndGlyphs" >simple.</text></g></svg></div><div class="cb"></div><div class="ti">Simple YouTube Banner</div><div class="ty">Social</div><div class="id">180439</div></div>
<div class="card r2" style="left:1081.0px;top:553.5px;height:248.5px"><div class="img"><svg class="abs" style="left:-1px;top:-1px" width="200" height="200" viewBox="0 0 200 200" font-family="Liberation Sans, sans-serif"><g transform="translate(0 -0.5)"><rect x="60.6" y="6" width="78" height="189.4" fill="#fff"/><rect x="60.6" y="48" width="78" height="147.4" fill="#1e1853"/><text x="74.6" y="28.4" font-size="13.6" font-weight="bold" fill="#221c5c" textLength="50.4" lengthAdjust="spacingAndGlyphs" >simple.</text><text x="73.6" y="37.8" font-size="2.7" font-weight="bold" fill="#221c5c" textLength="52.6" lengthAdjust="spacingAndGlyphs" >Manage Marketing Better. It's Simple.</text><clipPath id="c13"><rect x="7" y="0" width="943" height="968"/></clipPath><svg x="60" y="56" width="80" height="80" viewBox="0 0 968 968"><g clip-path="url(#c13)"><g stroke="#44428c" stroke-width="3" fill="none"><path d="M350 180 Q450 80 600 170 L470 430 M370 120 H520 M340 180 L380 400 M610 170 L540 430 M420 150 L400 330 M130 470 L250 540 M300 610 L470 700 M580 540 L660 600 M560 420 Q600 380 660 420 M850 470 Q900 500 940 470 M830 600 V700 M180 600 V680 M420 680 L520 720 M850 540 L940 520"/></g><path d="M10 265 L200 185 L210 228 L20 332 Z" fill="#7a5ad8"/><path d="M20 332 L210 228 L210 246 L22 350 Z" fill="#46368f"/><g stroke="#b9a8f0" stroke-width="7"><path d="M60 250 l10 60 M110 228 l10 60 M160 206 l10 60"/></g><path d="M12 398 L130 344 L130 456 L12 512 Z" fill="#8ed68e" stroke="#c9ccd8" stroke-width="6"/><path d="M60 380 Q100 370 110 410 Q90 440 60 420 Z" fill="#2a3a7a"/><path d="M30 440 l40 -18 v30 l-40 18z" fill="#c9a2c0"/><path d="M140 320 l26 -10 l10 50 l-26 10z" fill="#6f78b0"/><g fill="#f3c23c" stroke="#8a6a1a" stroke-width="2"><path d="M190 115 L250 150 L250 218 L190 183 Z"/><path d="M195 245 L245 275 L245 342 L195 312 Z"/><path d="M270 245 L330 215 L330 282 L270 312 Z"/></g><path d="M345 215 L375 185 L405 215 L375 250 Z" fill="#e9a93a"/><path d="M360 215 L375 200 L390 215 L375 232 Z" fill="#3b8fd6"/><path d="M375 330 L408 280 L436 322 L405 340 Z" fill="#35c98a"/><path d="M460 262 L490 246 L520 262 L520 296 L490 312 L460 296 Z" fill="#e9a93a"/><path d="M460 262 L490 278 L490 312 L460 296 Z" fill="#3b6fd0"/><path d="M470 256 L490 246 L510 256 L490 268 Z" fill="#35c9a8"/><path d="M245 470 L375 395 L580 520 L450 600 Z" fill="#eef0f6"/><path d="M245 470 L450 600 L450 618 L245 488 Z" fill="#aab0c6"/><path d="M450 600 L580 520 L580 538 L450 618 Z" fill="#c9ccd8"/><path d="M285 470 L375 418 L540 518 L450 572 Z" fill="#3f9fe6"/><path d="M340 462 L380 440 L420 464 L380 488 Z M400 500 L440 478 L490 508 L450 532 Z" fill="#222a5a"/><g><path d="M615 300 L800 395 L800 430 L615 335 Z" fill="#e9b23a"/><path d="M625 372 L830 477 L830 512 L625 407 Z" fill="#e9b23a"/><path d="M640 446 L850 551 L850 586 L640 481 Z" fill="#e9b23a"/><path d="M615 335 L800 430 L800 444 L615 349 Z M625 407 L830 512 L830 526 L625 421 Z M640 481 L850 586 L850 600 L640 495 Z" fill="#2f7fd0"/></g><g stroke="#f6dc8a" stroke-width="5"><path d="M640 326 L780 398 M650 398 L810 480 M665 472 L830 556"/></g><g fill="#d9922a" stroke="#7a5210" stroke-width="2"><path d="M800 200 L850 180 L856 250 L806 270 Z"/><path d="M860 160 L938 136 L944 214 L866 238 Z"/></g><path d="M880 170 l40 -12 v14 l-40 12z M880 196 l40 -12 v14 l-40 12z" fill="#3b6fd0"/><path d="M880 110 q20 -10 26 14" stroke="#3b8fd6" stroke-width="5" fill="none"/><path d="M778 300 L950 228 L950 400 L800 372 Z" fill="#49a8ea"/><path d="M900 250 L950 228 L950 400 L910 392 Z" fill="#1f5fa6"/><ellipse cx="938" cy="340" rx="22" ry="40" fill="#14346a"/><path d="M770 310 L800 298 L812 372 L782 380 Z" fill="#1f6db6"/><circle cx="795" cy="352" r="22" fill="#f3c23c"/><use href="#cl" x="668.0" y="220.4" width="120" height="103.2"/><use href="#cl" x="-26.0" y="539.6" width="80" height="68.8"/><use href="#cl" x="346.0" y="757.0" width="100" height="86.0"/><use href="#cl" x="512.0" y="703.6" width="80" height="68.8"/><use href="#cl" x="230.0" y="565.6" width="80" height="68.8"/><rect x="55" y="552" width="86" height="50" rx="22" fill="#e9b23a"/><path d="M55 640 L108 630 L100 668 L60 676 Z" fill="#d9922a"/><path d="M470 630 L545 585 L605 620 L530 665 Z" fill="#e0962a"/><path d="M470 630 L530 665 L530 680 L470 645 Z" fill="#a86a16"/><path d="M500 630 L545 603 L580 622 L534 650 Z" fill="#27407a"/><path d="M70 720 L230 660 L275 700 L275 800 L120 862 L70 822 Z" fill="#c98a2e"/><path d="M70 720 L120 760 L275 700 L230 660 Z" fill="#e9b23a"/><path d="M110 770 L250 716 V780 L110 836 Z" fill="#9a6a26"/><path d="M205 640 Q220 610 245 636 L240 700 L210 700 Z" fill="#d9922a"/><path d="M255 650 L330 630 L360 650 L360 742 L290 760 L255 738 Z" fill="#dfe6f2"/><path d="M270 672 L318 660 V730 L270 742 Z" fill="#7fb6ea"/><path d="M328 668 l24 -6 v60 l-24 6z" fill="#9aa6c8"/><ellipse cx="60" cy="840" rx="32" ry="42" fill="#f1f2f7" stroke="#c98a2e" stroke-width="8"/><ellipse cx="180" cy="850" rx="22" ry="30" fill="#e9b23a" stroke="#9a6a26" stroke-width="6"/><path d="M200 820 Q250 800 290 826 L270 850 Q240 836 210 850 Z" fill="#2f7fd0"/><circle cx="62" cy="716" r="12" fill="#3b8fd6"/><use href="#cl" x="105.0" y="732.7" width="110" height="94.6"/><ellipse cx="712" cy="742" rx="142" ry="100" fill="#3fb86a"/><ellipse cx="700" cy="690" rx="110" ry="50" fill="#8fd68f"/><ellipse cx="640" cy="800" rx="70" ry="40" fill="#2fa85a"/><g fill="#f3c23c" stroke="#9a6a16" stroke-width="3"><path d="M590 760 L625 740 L640 752 L640 822 L606 840 L590 828 Z"/><path d="M650 716 L685 698 L700 710 L700 780 L666 798 L650 786 Z"/><path d="M705 682 L738 666 L752 678 L752 744 L720 760 L705 748 Z"/><path d="M756 660 L786 646 L800 656 L800 720 L770 734 L756 724 Z"/><path d="M806 644 L830 634 L842 644 L842 700 L818 710 L806 700 Z"/></g><path d="M716 700 l22 -10 v24 l-22 10z M766 676 l20 -9 v22 l-20 9z" fill="#3b6fd0"/><path d="M810 826 L862 806 L904 830 L904 872 L852 894 L810 868 Z" fill="#eef0f6"/><path d="M822 838 l30 -10 v34 l-30 10z" fill="#3b6fd0"/><path d="M862 820 l24 -10 l14 10 v30 l-20 8z" fill="#d9922a"/><g stroke="#c9b23a" stroke-width="4"><path d="M660 866 v20 M690 872 v20 M720 852 v20 M750 838 v20"/></g></g></svg><use href="#lg" x="63.4" y="148.4" width="8" height="8"/><text x="72.6" y="152" font-size="1.7" font-weight="bold" fill="#4aa8dc" >simple.</text><text x="72.6" y="154.6" font-size="2.2" font-weight="normal" fill="#e8e8f2" textLength="10" lengthAdjust="spacingAndGlyphs" >Admation</text><path d="M88 149 q2 -2 4 0 l1 6 q-2 2.4 -4.6 .6z" fill="none" stroke="#3fc98a" stroke-width="1"/><text x="94.6" y="152" font-size="1.7" font-weight="bold" fill="#3fc98a" >simple.</text><text x="94.6" y="154.6" font-size="2.2" font-weight="normal" fill="#e8e8f2" textLength="15" lengthAdjust="spacingAndGlyphs" >Asset Manager</text><path d="M116 151 q3 -3 7 0 q2 3 -1 5 q-4 1 -6 -2z" fill="none" stroke="#e8c23c" stroke-width="1.1"/><text x="125.4" y="152" font-size="1.7" font-weight="bold" fill="#e8c23c" >simple.</text><text x="125.4" y="154.6" font-size="2.2" font-weight="normal" fill="#e8e8f2" textLength="10" lengthAdjust="spacingAndGlyphs" >TeleLead</text><text x="82.8" y="176.8" font-size="4.6" font-weight="bold" fill="#f4f4fa" textLength="34" lengthAdjust="spacingAndGlyphs" >www.simple.io</text></g></svg></div><div class="cb"></div><div class="ti">Simple Pullup Banner</div><div class="ty">Marketing Collateral</div><div class="id">2416800</div></div>
<div class="card r2" style="left:1291.4px;top:553.5px;height:248.5px"><div class="img"><svg class="abs" style="left:-1px;top:-1px" width="200" height="200" viewBox="0 0 200 200" font-family="Liberation Sans, sans-serif"><g transform="translate(-0.4 -0.5)"><rect x="61" y="6" width="78" height="189.4" fill="#fff"/><rect x="61" y="48" width="78" height="147.4" fill="#1e1853"/><use href="#lg" x="71.6" y="13.6" width="22" height="22"/><text x="100" y="22.4" font-size="5" font-weight="bold" fill="#4aa8dc" textLength="18" lengthAdjust="spacingAndGlyphs" >simple.</text><text x="100" y="29.8" font-size="6.8" font-weight="normal" fill="#333" textLength="28" lengthAdjust="spacingAndGlyphs" >Admation</text><text x="77.6" y="42" font-size="2.7" font-weight="bold" fill="#333" textLength="44.6" lengthAdjust="spacingAndGlyphs" >Marketing Project Management</text><rect x="68.4" y="56.6" width="4.4" height="4.8" rx=".8" fill="none" stroke="#cfd0e4" stroke-width=".5"/><text x="77" y="60.4" font-size="2.7" font-weight="bold" fill="#f0f0f8" textLength="55.6" lengthAdjust="spacingAndGlyphs" >Marketing Approvals &amp; Online Proofing</text><rect x="68.4" y="65.9" width="4.4" height="4.8" rx=".8" fill="none" stroke="#cfd0e4" stroke-width=".5"/><text x="77" y="69.7" font-size="2.7" font-weight="bold" fill="#f0f0f8" textLength="32" lengthAdjust="spacingAndGlyphs" >Marketing Compliance</text><rect x="68.4" y="75.2" width="4.4" height="4.8" rx=".8" fill="none" stroke="#cfd0e4" stroke-width=".5"/><text x="77" y="79.0" font-size="2.7" font-weight="bold" fill="#f0f0f8" textLength="47.6" lengthAdjust="spacingAndGlyphs" >Marketing Resource Management</text><rect x="68.4" y="84.5" width="4.4" height="4.8" rx=".8" fill="none" stroke="#cfd0e4" stroke-width=".5"/><text x="77" y="88.3" font-size="2.7" font-weight="bold" fill="#f0f0f8" textLength="37.6" lengthAdjust="spacingAndGlyphs" >Digital Asset Management</text><svg x="61" y="97" width="78" height="72" viewBox="0 0 78 72" overflow="hidden"><use href="#iso" x="-9" y="2" width="92" height="69"/><path d="M72 28 L78 31 V37 L72 34 Z" fill="#f4c543"/></svg><text x="83.4" y="177" font-size="4.6" font-weight="bold" fill="#f4f4fa" textLength="34" lengthAdjust="spacingAndGlyphs" >www.simple.io</text></g></svg></div><div class="cb"></div><div class="ti">Admation Pullup Banner</div><div class="ty">Marketing Collateral</div><div class="id">2416801</div></div>
</div>
</body>
</html>
